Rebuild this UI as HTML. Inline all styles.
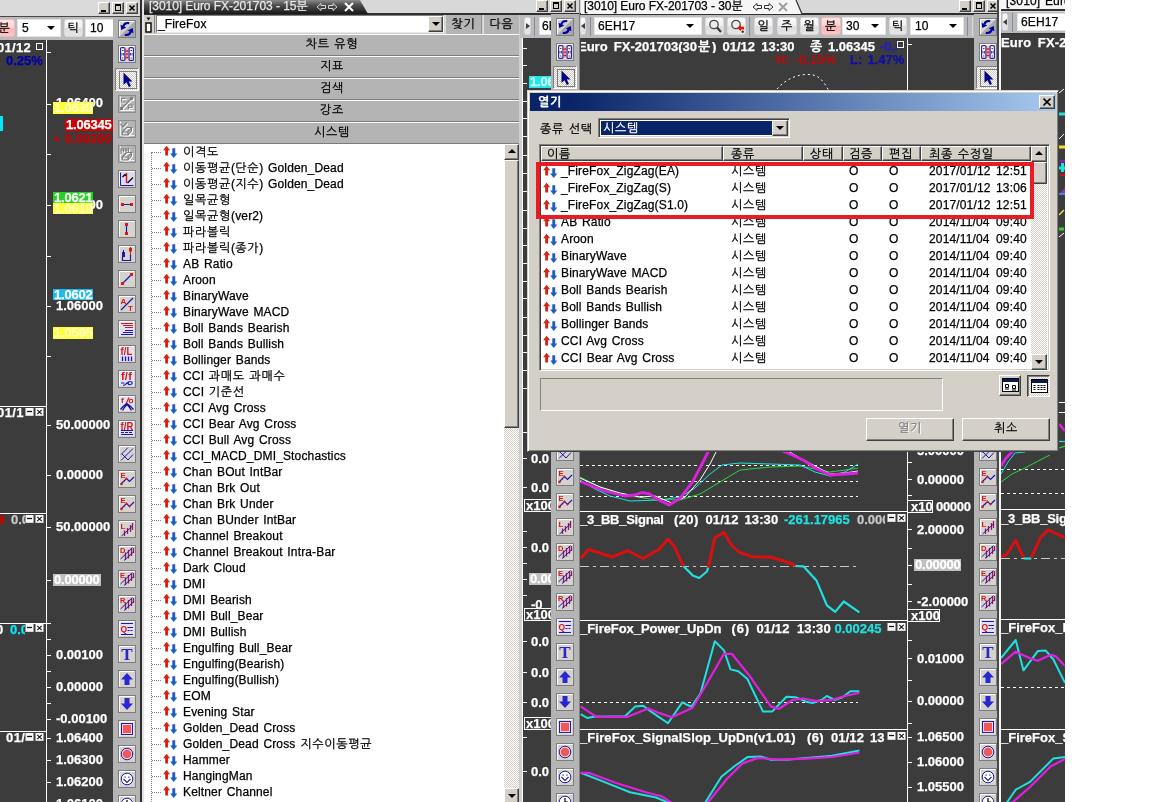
<!DOCTYPE html>
<html lang="ko"><head><meta charset="utf-8"><title>열기</title>
<style>
html,body{margin:0;padding:0;background:#fff;}
body{width:1152px;height:802px;position:relative;overflow:hidden;font:12px/14px "Liberation Sans","NanumGothic",sans-serif;color:#000;letter-spacing:0.150px;word-spacing:1.200px;-webkit-text-stroke:0.250px currentColor;}
.k{letter-spacing:0.72px;}
#app{position:absolute;left:0;top:0;width:1065px;height:802px;overflow:hidden;background:#3c3c3c;will-change:transform;}
.a{position:absolute;}
.t{position:absolute;white-space:nowrap;}
.cb{position:absolute;white-space:nowrap;font-weight:bold;font-size:13px;line-height:13px;color:#fff;letter-spacing:0;word-spacing:1.600px;}
.bar{position:absolute;background:#d6d6d6;}
.vtb{position:absolute;background:#b4b4b4;}
.ic{position:absolute;width:18px;height:18px;}
.btn{position:absolute;background:#d4d0c8;box-sizing:border-box;border:1px solid;border-color:#fff #404040 #404040 #fff;box-shadow:inset -1px -1px 0 #808080;}
.wb{position:absolute;width:12px;height:12px;background:#d4d0c8;box-sizing:border-box;border:1px solid;border-color:#fff #404040 #404040 #fff;box-shadow:inset -1px -1px 0 #808080;}
.sec{position:absolute;left:144px;width:376px;height:22px;box-sizing:border-box;background:#b4b4b4;border-top:1px solid #fafafa;border-bottom:1px solid #7c7c7c;text-align:center;line-height:18px;font-size:12px;}
.tb{position:absolute;box-sizing:border-box;border:1px solid #d8d8d8;border-radius:2.500px;background:linear-gradient(#fbfbfb 0%,#efefef 50%,#dedede 52%,#e6e6e6 100%);text-align:center;font-size:12px;line-height:16px;}
.tb.on{background:linear-gradient(#ffe4e4 0%,#ffd0d0 50%,#ffb4b4 52%,#ffc4c4 100%);border-color:#f0b8b8;}
.inp{position:absolute;box-sizing:border-box;background:#fff;border:1px solid #e4e4e4;font-size:12px;line-height:16px;padding-left:4px;}
.hl{position:absolute;height:1px;background:#fff;}
.vl{position:absolute;width:1px;background:#fff;}
.tick{position:absolute;width:4px;height:1px;background:#fff;}
.lab{position:absolute;white-space:nowrap;font-weight:bold;font-size:13px;line-height:12px;height:12px;letter-spacing:-0.2px;overflow:hidden;box-sizing:border-box;padding-left:1px;}
.pb{position:absolute;width:8px;height:8px;box-sizing:border-box;border:1px solid #fff;background:#3c3c3c;}
.row{position:absolute;left:0;height:17px;line-height:17px;white-space:nowrap;}
</style></head><body><div id="app">
<svg width="0" height="0" style="position:absolute"><defs><pattern id="dz" width="2" height="2" patternUnits="userSpaceOnUse"><rect width="2" height="2" fill="#fff"/><rect width="1" height="1" fill="#d0ccc4"/><rect x="1" y="1" width="1" height="1" fill="#d0ccc4"/></pattern></defs></svg>

<div class="bar" style="left:0;top:0;width:141px;height:17px;background:#dadada"></div>
<div class="a" style="left:0;top:15.500px;width:141px;height:1.500px;background:#484848"></div>
<div class="wb" style="left:98px;top:2px"><div class="a" style="left:2px;top:7px;width:5px;height:2px;background:#000"></div></div><div class="wb" style="left:112px;top:2px"><div class="a" style="left:2px;top:1px;width:6px;height:7px;box-sizing:border-box;border:1px solid #000;border-top-width:2px"></div></div><div class="wb" style="left:126px;top:2px"><svg class="a" style="left:1px;top:1px" width="8" height="8"><path d="M1.5 1.5L6.5 6.5M6.5 1.5L1.5 6.5" stroke="#000" stroke-width="1.6"/></svg></div>
<div class="a" style="left:0;top:17px;width:114px;height:23px;background:#b9bbbe"></div>
<div class="tb on" style="left:-6px;top:19px;width:21px;height:18px"><span class="k">분</span></div>
<div class="inp" style="left:17px;top:19px;width:44px;height:18px">5<span class="a" style="right:5px;top:6px;width:0;height:0;border:4px solid transparent;border-top:4px solid #000;border-bottom:0"></span></div>
<div class="tb" style="left:64px;top:19px;width:19px;height:18px"><span class="k">틱</span></div>
<div class="inp" style="left:85px;top:19px;width:30px;height:18px">10</div>
<div class="vtb" style="left:113px;top:17px;width:27px;height:785px"></div><svg class="ic" style="left:118px;top:20px" viewBox="0 0 18 18"><rect x="0.5" y="0.5" width="17" height="17" fill="#d6d3ce" stroke="#7c7c7c"/><path d="M1.5 16.5V1.5H16.5" fill="none" stroke="#fff"/><path d="M17 1V17H1Z" fill="#a8a8a8"/><path d="M11.200 3.200C8.500 2.600 6 3.800 5.300 6.500" fill="none" stroke="#0000a8" stroke-width="2.200"/><path d="M3.200 10L2.600 4.800L8.300 7.600Z" fill="#0000a8"/><path d="M6.800 14.800C9.500 15.400 12 14.200 12.700 11.500" fill="none" stroke="#0000a8" stroke-width="2.200"/><path d="M14.800 8L15.400 13.200L9.700 10.400Z" fill="#0000a8"/></svg><svg class="ic" style="left:118px;top:45px" viewBox="0 0 18 18"><rect x="0.5" y="0.5" width="17" height="17" fill="#d6d3ce" stroke="#7c7c7c"/><path d="M1.5 16.5V1.5H16.5" fill="none" stroke="#fff"/><rect x="2" y="2" width="14" height="14" fill="#e6d8f2"/><rect x="7" y="3" width="4" height="12" fill="#f4b8c8"/><rect x="2.600" y="2.600" width="4.300" height="12.800" rx="1" fill="#fff" stroke="#28289c" stroke-width="1.200"/><rect x="11.100" y="2.600" width="4.300" height="12.800" rx="1" fill="#fff" stroke="#28289c" stroke-width="1.200"/><path d="M4 5.500H5.500M4 8V10.500M5.500 8V10.500M4 13H5.500M12.500 5.500H14M12.500 8V10.500M14 8V10.500M12.500 13H14" stroke="#28289c" stroke-width="0.900" fill="none"/><path d="M7.500 6H10.500M7.500 12.500H10.500" stroke="#e01818" stroke-width="1.600"/><path d="M8.200 8.200H9.800V10.200H8.200Z" fill="#e01818"/></svg><svg class="a" style="left:115px;top:68px" width="24" height="23" viewBox="0 0 24 23"><rect x="0" y="0" width="24" height="23" fill="url(#dz)"/><path d="M0.500 22.500V0.500H23.500" fill="none" stroke="#808080"/><path d="M23.500 0.500V22.500H0.500" fill="none" stroke="#fff"/><rect x="4.500" y="3.500" width="17" height="17" fill="url(#dz)" stroke="#7c7c7c"/><g transform="translate(4,3)"><path d="M4.500 1.500V14L7.500 11.200L9.800 16L12 15L9.800 10.400H13.500Z" fill="#00008c"/></g></svg><svg class="ic" style="left:118px;top:95px" viewBox="0 0 18 18"><rect x="0.500" y="0.500" width="17" height="17" fill="#b4b4b4" stroke="#8c8c8c"/><path d="M2.500 1.500V15.500H16.500" fill="none" stroke="#f4f4f4"/><g transform="translate(1,1)" fill="none" stroke="#fff" stroke-width="1.2"><path d="M3 14L14 3M3.5 3.5H7.5M3.5 3.5V7H7.5M10.5 14V10H14V12.5H10.5"/><rect x="2.5" y="12.5" width="2" height="2"/><rect x="12.5" y="2.5" width="2" height="2"/></g><g fill="none" stroke="#808080" stroke-width="1.2"><path d="M3 14L14 3M3.5 3.5H7.5M3.5 3.5V7H7.5M10.5 14V10H14V12.5H10.5"/><rect x="2.5" y="12.5" width="2" height="2"/><rect x="12.5" y="2.5" width="2" height="2"/></g></svg><svg class="ic" style="left:118px;top:120px" viewBox="0 0 18 18"><rect x="0.500" y="0.500" width="17" height="17" fill="#b4b4b4" stroke="#8c8c8c"/><path d="M2.500 1.500V15.500H16.500" fill="none" stroke="#f4f4f4"/><g transform="translate(1,1)" fill="none" stroke="#fff" stroke-width="1.2"><path d="M2.5 4L5 7L9 2.5M4.5 12L8.5 7.5H13.5L10 12ZM4.5 12V15H10V12M10 15L13.5 10.5V7.5"/></g><g fill="none" stroke="#808080" stroke-width="1.2"><path d="M2.5 4L5 7L9 2.5M4.5 12L8.5 7.5H13.5L10 12ZM4.5 12V15H10V12M10 15L13.5 10.5V7.5"/></g></svg><svg class="ic" style="left:118px;top:145px" viewBox="0 0 18 18"><rect x="0.500" y="0.500" width="17" height="17" fill="#b4b4b4" stroke="#8c8c8c"/><path d="M2.500 1.500V15.500H16.500" fill="none" stroke="#f4f4f4"/><g transform="translate(1,1)" fill="none" stroke="#fff" stroke-width="1.2"><path d="M3 3V9M5.5 3V7M8 3V7M10.5 3V7M3 5H11M4.5 12L8.5 7.5H13.5L10 12ZM4.5 12V15H10V12M10 15L13.5 10.5V7.5"/></g><g fill="none" stroke="#808080" stroke-width="1.2"><path d="M3 3V9M5.5 3V7M8 3V7M10.5 3V7M3 5H11M4.5 12L8.5 7.5H13.5L10 12ZM4.5 12V15H10V12M10 15L13.5 10.5V7.5"/></g></svg><svg class="ic" style="left:118px;top:170px" viewBox="0 0 18 18"><rect x="0.5" y="0.5" width="17" height="17" fill="#d6d3ce" stroke="#7c7c7c"/><path d="M1.5 16.5V1.5H16.5" fill="none" stroke="#fff"/><rect x="2" y="2" width="14" height="14" fill="#e0daf0"/><path d="M2.500 2.500V15.500H15.500" fill="none" stroke="#1818b0"/><path d="M8.5 3V13" stroke="#d81818" stroke-width="1.4"/><path d="M4.5 7L7 4.5L8 6M9.500 13L15 7.500" fill="none" stroke="#000" stroke-width="1.2"/></svg><svg class="ic" style="left:118px;top:195px" viewBox="0 0 18 18"><rect x="0.5" y="0.5" width="17" height="17" fill="#d6d3ce" stroke="#7c7c7c"/><path d="M1.5 16.5V1.5H16.5" fill="none" stroke="#fff"/><path d="M4 9.500H14" stroke="#1818b0" stroke-width="1"/><rect x="3" y="8" width="3" height="3" fill="#d81818"/><rect x="12" y="8" width="3" height="3" fill="#d81818"/></svg><svg class="ic" style="left:118px;top:220px" viewBox="0 0 18 18"><rect x="0.5" y="0.5" width="17" height="17" fill="#d6d3ce" stroke="#7c7c7c"/><path d="M1.5 16.5V1.5H16.5" fill="none" stroke="#fff"/><path d="M8.5 4V14" stroke="#1818b0" stroke-width="1.2"/><rect x="7" y="3" width="3" height="3" fill="#d81818"/><rect x="7" y="12" width="3" height="3" fill="#d81818"/></svg><svg class="ic" style="left:118px;top:245px" viewBox="0 0 18 18"><rect x="0.5" y="0.5" width="17" height="17" fill="#d6d3ce" stroke="#7c7c7c"/><path d="M1.5 16.5V1.5H16.5" fill="none" stroke="#fff"/><path d="M4.500 12V15.500H12.500V10" fill="none" stroke="#1818b0" stroke-width="1.2"/><path d="M5.500 5V12" stroke="#1818b0"/><rect x="4" y="7" width="3" height="5" fill="#1818b0"/><path d="M12.500 2V10" stroke="#d81818"/><rect x="11" y="3" width="3" height="3.500" fill="#d81818"/></svg><svg class="ic" style="left:118px;top:270px" viewBox="0 0 18 18"><rect x="0.5" y="0.5" width="17" height="17" fill="#d6d3ce" stroke="#7c7c7c"/><path d="M1.5 16.5V1.5H16.5" fill="none" stroke="#fff"/><path d="M4.5 13.500L13.500 4.500" stroke="#1818b0" stroke-width="1.2"/><rect x="3" y="12" width="3" height="3" fill="#d81818"/><rect x="12" y="3" width="3" height="3" fill="#d81818"/></svg><svg class="ic" style="left:118px;top:295px" viewBox="0 0 18 18"><rect x="0.5" y="0.5" width="17" height="17" fill="#d6d3ce" stroke="#7c7c7c"/><path d="M1.5 16.5V1.5H16.5" fill="none" stroke="#fff"/><path d="M3 15L15 3" stroke="#1818b0" stroke-width="1.2"/><text x="2.500" y="9" font-size="8" font-family="Liberation Sans,sans-serif" font-weight="bold" fill="#d81818">A</text><text x="10" y="15.500" font-size="8" font-family="Liberation Sans,sans-serif" font-weight="bold" fill="#d81818">T</text></svg><svg class="ic" style="left:118px;top:320px" viewBox="0 0 18 18"><rect x="0.5" y="0.5" width="17" height="17" fill="#d6d3ce" stroke="#7c7c7c"/><path d="M1.5 16.5V1.5H16.5" fill="none" stroke="#fff"/><rect x="2" y="2" width="14" height="14" fill="#e4e0f4"/><path d="M3 3.500H15M5 5.500H15M7 7.500H15" stroke="#d81818" stroke-width="1.1"/><path d="M7 10.500H15M5 12.500H15M3 14.500H15" stroke="#1818b0" stroke-width="1.1"/></svg><svg class="ic" style="left:118px;top:345px" viewBox="0 0 18 18"><rect x="0.5" y="0.5" width="17" height="17" fill="#d6d3ce" stroke="#7c7c7c"/><path d="M1.5 16.5V1.5H16.5" fill="none" stroke="#fff"/><rect x="2" y="2" width="14" height="14" fill="#e4e0f4"/><text x="2.500" y="10" font-size="10" textLength="12" lengthAdjust="spacingAndGlyphs" font-family="Liberation Sans,sans-serif" font-weight="bold" fill="#d81818">f/L</text><path d="M4.500 11.500V16M7.500 11.500V16M10.500 11.500V16M13.500 11.500V16" stroke="#1818b0" stroke-width="1.300"/></svg><svg class="ic" style="left:118px;top:370px" viewBox="0 0 18 18"><rect x="0.5" y="0.5" width="17" height="17" fill="#d6d3ce" stroke="#7c7c7c"/><path d="M1.5 16.5V1.5H16.5" fill="none" stroke="#fff"/><rect x="2" y="2" width="14" height="14" fill="#e4e0f4"/><text x="3" y="10" font-size="10" textLength="11" lengthAdjust="spacingAndGlyphs" font-family="Liberation Sans,sans-serif" font-weight="bold" fill="#d81818">f/f</text><path d="M3 13H6.500M5 15.500C8 15.500 9 11.500 12 11.500S15 14 12.500 14.500C10 15 9 13 11 12.500" fill="none" stroke="#1818b0" stroke-width="1.1"/></svg><svg class="ic" style="left:118px;top:395px" viewBox="0 0 18 18"><rect x="0.5" y="0.5" width="17" height="17" fill="#d6d3ce" stroke="#7c7c7c"/><path d="M1.5 16.5V1.5H16.5" fill="none" stroke="#fff"/><rect x="2" y="2" width="14" height="14" fill="#e4e0f4"/><text x="3" y="8" font-size="8" font-family="Liberation Sans,sans-serif" font-weight="bold" fill="#d81818">f</text><circle cx="13" cy="6" r="1.8" fill="none" stroke="#d81818" stroke-width="1.1"/><path d="M11 2.500L8 9" stroke="#d81818" stroke-width="1.2"/><path d="M2.500 14.500C5 11 7 10 9 8.500M4.500 15.500C6 12 8 10.500 9.500 9M9 8.500C11 10 13 11.500 15.500 14.500M9.500 10C11 11.500 12 13 13.500 15.500" fill="none" stroke="#101090" stroke-width="1.3"/></svg><svg class="ic" style="left:118px;top:420px" viewBox="0 0 18 18"><rect x="0.5" y="0.5" width="17" height="17" fill="#d6d3ce" stroke="#7c7c7c"/><path d="M1.5 16.5V1.5H16.5" fill="none" stroke="#fff"/><rect x="2" y="2" width="14" height="14" fill="#e4e0f4"/><text x="2.500" y="10" font-size="10" textLength="13" lengthAdjust="spacingAndGlyphs" font-family="Liberation Sans,sans-serif" font-weight="bold" fill="#d81818">f/R</text><path d="M3 10.500H15M3 14.500H15" stroke="#1818b0" stroke-width="1.2"/><path d="M3 12.500H15" stroke="#1818b0" stroke-width="1.2" stroke-dasharray="3 1"/></svg><svg class="ic" style="left:118px;top:445px" viewBox="0 0 18 18"><rect x="0.5" y="0.5" width="17" height="17" fill="#d6d3ce" stroke="#7c7c7c"/><path d="M1.5 16.5V1.5H16.5" fill="none" stroke="#fff"/><path d="M3 9.500L10 2.500M3 15.500L15 3.500M4 9L10 15L15 9.500" fill="none" stroke="#1818b0" stroke-width="1"/></svg><svg class="ic" style="left:118px;top:470px" viewBox="0 0 18 18"><rect x="0.5" y="0.5" width="17" height="17" fill="#d6d3ce" stroke="#7c7c7c"/><path d="M1.5 16.5V1.5H16.5" fill="none" stroke="#fff"/><path d="M3 14L8.500 8.500L11.500 11.500L16 7" fill="none" stroke="#1818b0" stroke-width="1.2"/><text x="2.500" y="8" font-size="7.500" font-family="Liberation Sans,sans-serif" font-weight="bold" fill="#d81818">E</text><path d="M7 9.500L8.500 7L10 9.500Z" fill="#d81818"/><circle cx="3.500" cy="14" r="1.300" fill="#d81818"/><path d="M5.500 12L6.500 11" stroke="#d81818"/></svg><svg class="ic" style="left:118px;top:495px" viewBox="0 0 18 18"><rect x="0.5" y="0.5" width="17" height="17" fill="#d6d3ce" stroke="#7c7c7c"/><path d="M1.5 16.5V1.5H16.5" fill="none" stroke="#fff"/><path d="M3 14L8.500 8.500L11.500 11.500L16 7" fill="none" stroke="#1818b0" stroke-width="1.2"/><text x="2.500" y="8" font-size="7.500" font-family="Liberation Sans,sans-serif" font-weight="bold" fill="#d81818">E</text><path d="M7 9.500L8.500 7L10 9.500Z" fill="#d81818"/><circle cx="3.500" cy="14" r="1.300" fill="#d81818"/><path d="M5.500 12L6.500 11" stroke="#d81818"/><path d="M10.200 10.500H13L11.500 13Z" fill="#d81818"/></svg><svg class="ic" style="left:118px;top:520px" viewBox="0 0 18 18"><rect x="0.5" y="0.5" width="17" height="17" fill="#d6d3ce" stroke="#7c7c7c"/><path d="M1.5 16.5V1.5H16.5" fill="none" stroke="#fff"/><text x="2.500" y="8.500" font-size="8" font-family="Liberation Sans,sans-serif" font-weight="bold" fill="#d81818">L</text><path d="M6.500 10.500V16M9.500 8V14M12.500 5V12M14.500 3V10" fill="none" stroke="#a01858" stroke-width="1.300"/><path d="M3.500 16L15 5.500" fill="none" stroke="#1818b0" stroke-width="1"/></svg><svg class="ic" style="left:118px;top:545px" viewBox="0 0 18 18"><rect x="0.5" y="0.5" width="17" height="17" fill="#d6d3ce" stroke="#7c7c7c"/><path d="M1.5 16.5V1.5H16.5" fill="none" stroke="#fff"/><path d="M7.500 7.500V15M10.500 5V13.500M13.500 3V11M15.500 3V8" fill="none" stroke="#a01858" stroke-width="1.300"/><path d="M2.500 14L14.500 2.500M6 15.500L16 6.500" fill="none" stroke="#1818b0" stroke-width="1"/><text x="2" y="8" font-size="7.500" font-family="Liberation Sans,sans-serif" font-weight="bold" fill="#d81818">D</text></svg><svg class="ic" style="left:118px;top:570px" viewBox="0 0 18 18"><rect x="0.5" y="0.5" width="17" height="17" fill="#d6d3ce" stroke="#7c7c7c"/><path d="M1.5 16.5V1.5H16.5" fill="none" stroke="#fff"/><path d="M7.500 7.500V15M10.500 5V13.500M13.500 3V11M15.500 3V8" fill="none" stroke="#a01858" stroke-width="1.300"/><path d="M2.500 14L14.500 2.500M6 15.500L16 6.500" fill="none" stroke="#1818b0" stroke-width="1"/><text x="2" y="8" font-size="7.500" font-family="Liberation Sans,sans-serif" font-weight="bold" fill="#d81818">E</text></svg><svg class="ic" style="left:118px;top:595px" viewBox="0 0 18 18"><rect x="0.5" y="0.5" width="17" height="17" fill="#d6d3ce" stroke="#7c7c7c"/><path d="M1.5 16.5V1.5H16.5" fill="none" stroke="#fff"/><path d="M7.500 7.500V15M10.500 5V13.500M13.500 3V11M15.500 3V8" fill="none" stroke="#a01858" stroke-width="1.300"/><path d="M2.500 14L14.500 2.500M6 15.500L16 6.500" fill="none" stroke="#1818b0" stroke-width="1"/><text x="2" y="8" font-size="7.500" font-family="Liberation Sans,sans-serif" font-weight="bold" fill="#d81818">R</text></svg><svg class="ic" style="left:118px;top:620px" viewBox="0 0 18 18"><rect x="0.5" y="0.5" width="17" height="17" fill="#d6d3ce" stroke="#7c7c7c"/><path d="M1.5 16.5V1.5H16.5" fill="none" stroke="#fff"/><rect x="2" y="2" width="14" height="14" fill="#e4e0f4"/><path d="M3 3.500H15M3 14.500H15M9.500 7.500H15" stroke="#1818b0" stroke-width="1.2"/><path d="M9.500 10.500H15" stroke="#1818b0" stroke-width="1.2" stroke-dasharray="2 1"/><text x="2.500" y="12" font-size="8.500" font-family="Liberation Sans,sans-serif" font-weight="bold" fill="#d81818">Q</text></svg><svg class="ic" style="left:118px;top:645px" viewBox="0 0 18 18"><rect x="0.5" y="0.5" width="17" height="17" fill="#d6d3ce" stroke="#7c7c7c"/><path d="M1.5 16.5V1.5H16.5" fill="none" stroke="#fff"/><text x="9" y="15" font-size="17" font-family="Liberation Serif,serif" font-weight="bold" fill="#2828c8" text-anchor="middle">T</text></svg><svg class="ic" style="left:118px;top:670px" viewBox="0 0 18 18"><rect x="0.5" y="0.5" width="17" height="17" fill="#d6d3ce" stroke="#7c7c7c"/><path d="M1.5 16.5V1.5H16.5" fill="none" stroke="#fff"/><path d="M9 3L15 9.500H11.500V15H6.500V9.500H3Z" fill="#2828d0"/></svg><svg class="ic" style="left:118px;top:695px" viewBox="0 0 18 18"><rect x="0.5" y="0.5" width="17" height="17" fill="#d6d3ce" stroke="#7c7c7c"/><path d="M1.5 16.5V1.5H16.5" fill="none" stroke="#fff"/><path d="M9 15L15 8.500H11.500V3H6.500V8.500H3Z" fill="#2828d0"/></svg><svg class="ic" style="left:118px;top:720px" viewBox="0 0 18 18"><rect x="0.5" y="0.5" width="17" height="17" fill="#d6d3ce" stroke="#7c7c7c"/><path d="M1.5 16.5V1.5H16.5" fill="none" stroke="#fff"/><rect x="2" y="2" width="14" height="14" fill="#e4e0f4"/><rect x="3.500" y="3.500" width="11" height="11" fill="#f05858" stroke="#2020a0" stroke-width="1"/><rect x="4.500" y="4.500" width="9" height="9" fill="none" stroke="#f4d0e0" stroke-width="1"/></svg><svg class="ic" style="left:118px;top:745px" viewBox="0 0 18 18"><rect x="0.5" y="0.5" width="17" height="17" fill="#d6d3ce" stroke="#7c7c7c"/><path d="M1.5 16.5V1.5H16.5" fill="none" stroke="#fff"/><circle cx="9" cy="9" r="5.800" fill="#f4d0e0" stroke="#2020a0" stroke-width="1"/><circle cx="9" cy="9" r="4.300" fill="#f05858"/></svg><svg class="ic" style="left:118px;top:770px" viewBox="0 0 18 18"><rect x="0.5" y="0.5" width="17" height="17" fill="#d6d3ce" stroke="#7c7c7c"/><path d="M1.5 16.5V1.5H16.5" fill="none" stroke="#fff"/><circle cx="9" cy="9" r="5.800" fill="#fff" stroke="#2020a0" stroke-width="1"/><path d="M5.500 9L9 12.500L12.500 9" fill="none" stroke="#2020a0" stroke-width="1.1"/><rect x="6.500" y="6.500" width="1.200" height="1.200" fill="#2020a0"/><rect x="10.300" y="6.500" width="1.200" height="1.200" fill="#2020a0"/></svg><svg class="ic" style="left:118px;top:795px" viewBox="0 0 18 18"><rect x="0.5" y="0.5" width="17" height="17" fill="#d6d3ce" stroke="#7c7c7c"/><path d="M1.5 16.5V1.5H16.5" fill="none" stroke="#fff"/><circle cx="9" cy="9" r="5.800" fill="#fff" stroke="#2020a0" stroke-width="1"/><path d="M9 5V9H12" fill="none" stroke="#000" stroke-width="1.2"/></svg>
<div class="a" style="left:140px;top:0;width:2px;height:802px;background:#2c2c2c"></div>
<div class="a" style="left:142px;top:0;width:2px;height:802px;background:#e4e4e4"></div>
<div class="vl" style="left:46px;top:40px;height:762px"></div>
<div class="cb" style="left:-3px;top:41px;letter-spacing:0.300px">01/12</div>
<div class="pb" style="left:36px;top:43px;width:7px;height:7px"></div>
<div class="cb" style="left:6px;top:54px;color:#0000a8">0.25%</div>
<div class="a" style="left:0;top:116px;width:3px;height:15px;background:#00e8f8"></div>
<div class="tick" style="left:47px;top:52px"></div>
<div class="tick" style="left:47px;top:104px"></div>
<div class="tick" style="left:47px;top:154px"></div>
<div class="tick" style="left:47px;top:205px"></div>
<div class="tick" style="left:47px;top:256px"></div>
<div class="tick" style="left:47px;top:306px"></div>
<div class="tick" style="left:47px;top:356px"></div>
<div class="tick" style="left:47px;top:425px"></div>
<div class="tick" style="left:47px;top:475px"></div>
<div class="tick" style="left:47px;top:527px"></div>
<div class="tick" style="left:47px;top:580px"></div>
<div class="tick" style="left:47px;top:623px"></div>
<div class="tick" style="left:47px;top:639px"></div>
<div class="tick" style="left:47px;top:655px"></div>
<div class="tick" style="left:47px;top:671px"></div>
<div class="tick" style="left:47px;top:687px"></div>
<div class="tick" style="left:47px;top:703px"></div>
<div class="tick" style="left:47px;top:719px"></div>
<div class="tick" style="left:47px;top:738px"></div>
<div class="tick" style="left:47px;top:760px"></div>
<div class="tick" style="left:47px;top:782px"></div>
<div class="cb" style="left:56px;top:96px;color:#fff">1.06400</div>
<div class="lab" style="left:53px;top:102px;width:40px;background:#ffff38;color:#ffffc0">1.0639</div>
<div class="lab" style="left:65px;top:119px;width:48px;background:#d00000;color:#fff">1.06345</div>
<div class="cb" style="left:54px;top:132px;color:#c80000"><span style="font-size:6px;vertical-align:2px">◆</span> 0.00260</div>
<div class="cb" style="left:56px;top:198px;color:#fff">1.06200</div>
<div class="lab" style="left:53px;top:192px;width:40px;background:#28d028;color:#fff">1.0621</div>
<div class="lab" style="left:53px;top:203px;width:40px;background:#ffff38;color:#ffffc0;height:11px">1.0619</div>
<div class="lab" style="left:53px;top:289px;width:40px;background:#20b8f0;color:#fff;height:11px">1.0602</div>
<div class="cb" style="left:56px;top:299px;color:#fff">1.06000</div>
<div class="lab" style="left:53px;top:327px;width:40px;background:#ffff38;color:#ffffc0">1.0595</div>
<div class="hl" style="left:0;top:406px;width:46px"></div>
<div class="cb" style="left:-3px;top:406px;letter-spacing:0.400px">01/1</div>
<svg class="a" style="left:25px;top:408px" width="20" height="8" viewBox="0 0 20 8"><rect x="0.500" y="0" width="8" height="8" fill="#f8f8f8"/><path d="M2 3.500H7" stroke="#111" stroke-width="1.300"/><rect x="10.500" y="0" width="8" height="8" fill="#f8f8f8"/><path d="M12.300 1.800L16.700 6.200M16.700 1.800L12.300 6.200" stroke="#111" stroke-width="1.100"/><path d="M0.500 8H8.500M10.500 8H18.500" stroke="#a0a0a0" stroke-width="0.800"/></svg>
<div class="cb" style="left:56px;top:418px;color:#fff">50.00000</div>
<div class="cb" style="left:56px;top:468px;color:#fff">0.00000</div>
<div class="hl" style="left:0;top:513px;width:46px"></div>
<div class="cb" style="left:-2px;top:513px;color:#d00000">8</div><div class="cb" style="left:11px;top:513px;color:#c8c8c8;width:14px;overflow:hidden">0.0</div>
<svg class="a" style="left:25px;top:515px" width="20" height="8" viewBox="0 0 20 8"><rect x="0.500" y="0" width="8" height="8" fill="#f8f8f8"/><path d="M2 3.500H7" stroke="#111" stroke-width="1.300"/><rect x="10.500" y="0" width="8" height="8" fill="#f8f8f8"/><path d="M12.300 1.800L16.700 6.200M16.700 1.800L12.300 6.200" stroke="#111" stroke-width="1.100"/><path d="M0.500 8H8.500M10.500 8H18.500" stroke="#a0a0a0" stroke-width="0.800"/></svg>
<div class="cb" style="left:56px;top:520px;color:#fff">50.00000</div>
<div class="lab" style="left:53px;top:574px;width:48px;background:#c0c0c0;color:#fff">0.00000</div>
<div class="hl" style="left:0;top:623px;width:50px"></div>
<div class="cb" style="left:-4px;top:623px">0</div><div class="cb" style="left:10px;top:623px;color:#00e8f8;width:15px;overflow:hidden">0.0</div>
<svg class="a" style="left:25px;top:624px" width="20" height="8" viewBox="0 0 20 8"><rect x="0.500" y="0" width="8" height="8" fill="#f8f8f8"/><path d="M2 3.500H7" stroke="#111" stroke-width="1.300"/><rect x="10.500" y="0" width="8" height="8" fill="#f8f8f8"/><path d="M12.300 1.800L16.700 6.200M16.700 1.800L12.300 6.200" stroke="#111" stroke-width="1.100"/><path d="M0.500 8H8.500M10.500 8H18.500" stroke="#a0a0a0" stroke-width="0.800"/></svg>
<div class="cb" style="left:56px;top:648px;color:#fff">0.00100</div>
<div class="cb" style="left:56px;top:680px;color:#fff">0.00000</div>
<div class="cb" style="left:56px;top:712px;color:#fff">-0.00100</div>
<div class="hl" style="left:0;top:731px;width:46px"></div>
<div class="cb" style="left:6px;top:731px;letter-spacing:0.400px">01/</div>
<svg class="a" style="left:25px;top:733px" width="20" height="8" viewBox="0 0 20 8"><rect x="0.500" y="0" width="8" height="8" fill="#f8f8f8"/><path d="M2 3.500H7" stroke="#111" stroke-width="1.300"/><rect x="10.500" y="0" width="8" height="8" fill="#f8f8f8"/><path d="M12.300 1.800L16.700 6.200M16.700 1.800L12.300 6.200" stroke="#111" stroke-width="1.100"/><path d="M0.500 8H8.500M10.500 8H18.500" stroke="#a0a0a0" stroke-width="0.800"/></svg>
<div class="cb" style="left:56px;top:731px;color:#fff">1.06400</div>
<div class="cb" style="left:56px;top:753px;color:#fff">1.06300</div>
<div class="cb" style="left:56px;top:775px;color:#fff">1.06200</div>
<div class="cb" style="left:56px;top:797px;color:#fff">1.06100</div>
<div class="a" style="left:144px;top:0;width:408px;height:802px;background:#fff"></div>
<div class="bar" style="left:144px;top:0;width:436px;height:14px;background:#d8d8d8"></div>
<div class="a" style="left:144px;top:13px;width:436px;height:2px;background:#303030"></div>
<svg class="a" style="left:144px;top:0" width="230" height="14"><defs><linearGradient id="tg" x1="0" y1="0" x2="0" y2="1"><stop offset="0" stop-color="#8a8a8a"/><stop offset="0.35" stop-color="#505050"/><stop offset="1" stop-color="#181818"/></linearGradient></defs><path d="M0 0H216L224 14H0Z" fill="url(#tg)"/></svg>
<div class="t" style="left:149px;top:0px;color:#e8e8e8;font-size:12px;line-height:13px;letter-spacing:-0.050px;word-spacing:0">[3010] Euro FX-201703 - 15<span class="k">분</span></div>
<svg class="a" style="left:316px;top:2px" width="22" height="10"><path d="M1 5L5 1.500V3.500H9.500V6.500H5V8.500ZM21 5L17 1.500V3.500H12.500V6.500H17V8.500Z" fill="none" stroke="#d8d8d8" stroke-width="1"/></svg>
<svg class="a" style="left:344px;top:2px" width="10" height="10"><path d="M1 1L9 9M9 1L1 9" stroke="#fff" stroke-width="2"/></svg>
<div class="wb" style="left:536px;top:0px"><div class="a" style="left:2px;top:7px;width:5px;height:2px;background:#000"></div></div><div class="wb" style="left:550px;top:0px"><div class="a" style="left:2px;top:1px;width:6px;height:7px;box-sizing:border-box;border:1px solid #000;border-top-width:2px"></div></div><div class="wb" style="left:564px;top:0px"><svg class="a" style="left:1px;top:1px" width="8" height="8"><path d="M1.5 1.5L6.5 6.5M6.5 1.5L1.5 6.5" stroke="#000" stroke-width="1.6"/></svg></div>
<div class="a" style="left:144px;top:15px;width:376px;height:19px;background:#d4d0c8"></div>
<svg class="a" style="left:145px;top:17px" width="8" height="16"><path d="M1.500 0.500L3.500 3.500L5.500 0.500Z" fill="#000"/><rect x="1" y="6" width="5" height="9" fill="#fff" stroke="#000" stroke-width="1.400"/></svg>
<div class="a" style="left:154px;top:15px;width:1px;height:18px;background:#808080"></div>
<div class="a" style="left:156px;top:15px;width:288px;height:18px;background:#fff;box-sizing:border-box;border:1px solid #808080;border-right-color:#fff;border-bottom-color:#e8e8e8"></div>
<div class="t" style="left:158px;top:17px;font-size:12px">_FireFox</div>
<div class="btn" style="left:428px;top:16px;width:15px;height:16px"><span class="a" style="left:3px;top:5px;width:0;height:0;border:4px solid transparent;border-top:4px solid #000;border-bottom:0"></span></div>
<div class="a" style="left:445px;top:15px;width:37px;height:19px;background:#b4b4b4;box-sizing:border-box;border-left:1px solid #e0e0e0;border-right:1px solid #909090;text-align:center;line-height:18px"><span class="k">찾기</span></div>
<div class="a" style="left:483px;top:15px;width:37px;height:19px;background:#b4b4b4;box-sizing:border-box;border-left:1px solid #e0e0e0;border-right:1px solid #909090;text-align:center;line-height:18px"><span class="k">다음</span></div>
<div class="sec" style="top:34px"><span class="k">차트</span> <span class="k">유형</span></div>
<div class="sec" style="top:56px"><span class="k">지표</span></div>
<div class="sec" style="top:78px"><span class="k">검색</span></div>
<div class="sec" style="top:100px"><span class="k">강조</span></div>
<div class="sec" style="top:122px"><span class="k">시스템</span></div>
<div class="a" style="left:151px;top:152px;width:0;height:650px;border-left:1px dotted #808080"></div>
<div class="a" style="left:152px;top:152px;width:9px;height:0;border-top:1px dotted #808080"></div>
<svg class="a" style="left:163px;top:145px" width="16" height="15" viewBox="0 0 16 15"><path d="M3.600 0.800L7.100 5.200H5.100V10.600H2.200V5.200H0.100Z" fill="#d42414"/><path d="M10.700 12.900L14.300 8.500H12.200V3.200H9.300V8.500H7.200Z" fill="#1c5cc8"/></svg>
<div class="t" style="left:183px;top:144px;line-height:16px;font-size:12px"><span class="k">이격도</span></div>
<div class="a" style="left:152px;top:168px;width:9px;height:0;border-top:1px dotted #808080"></div>
<svg class="a" style="left:163px;top:161px" width="16" height="15" viewBox="0 0 16 15"><path d="M3.600 0.800L7.100 5.200H5.100V10.600H2.200V5.200H0.100Z" fill="#d42414"/><path d="M10.700 12.900L14.300 8.500H12.200V3.200H9.300V8.500H7.200Z" fill="#1c5cc8"/></svg>
<div class="t" style="left:183px;top:160px;line-height:16px;font-size:12px"><span class="k">이동평균</span>(<span class="k">단순</span>) Golden_Dead</div>
<div class="a" style="left:152px;top:184px;width:9px;height:0;border-top:1px dotted #808080"></div>
<svg class="a" style="left:163px;top:177px" width="16" height="15" viewBox="0 0 16 15"><path d="M3.600 0.800L7.100 5.200H5.100V10.600H2.200V5.200H0.100Z" fill="#d42414"/><path d="M10.700 12.900L14.300 8.500H12.200V3.200H9.300V8.500H7.200Z" fill="#1c5cc8"/></svg>
<div class="t" style="left:183px;top:176px;line-height:16px;font-size:12px"><span class="k">이동평균</span>(<span class="k">지수</span>) Golden_Dead</div>
<div class="a" style="left:152px;top:200px;width:9px;height:0;border-top:1px dotted #808080"></div>
<svg class="a" style="left:163px;top:193px" width="16" height="15" viewBox="0 0 16 15"><path d="M3.600 0.800L7.100 5.200H5.100V10.600H2.200V5.200H0.100Z" fill="#d42414"/><path d="M10.700 12.900L14.300 8.500H12.200V3.200H9.300V8.500H7.200Z" fill="#1c5cc8"/></svg>
<div class="t" style="left:183px;top:192px;line-height:16px;font-size:12px"><span class="k">일목균형</span></div>
<div class="a" style="left:152px;top:216px;width:9px;height:0;border-top:1px dotted #808080"></div>
<svg class="a" style="left:163px;top:209px" width="16" height="15" viewBox="0 0 16 15"><path d="M3.600 0.800L7.100 5.200H5.100V10.600H2.200V5.200H0.100Z" fill="#d42414"/><path d="M10.700 12.900L14.300 8.500H12.200V3.200H9.300V8.500H7.200Z" fill="#1c5cc8"/></svg>
<div class="t" style="left:183px;top:208px;line-height:16px;font-size:12px"><span class="k">일목균형</span>(ver2)</div>
<div class="a" style="left:152px;top:232px;width:9px;height:0;border-top:1px dotted #808080"></div>
<svg class="a" style="left:163px;top:225px" width="16" height="15" viewBox="0 0 16 15"><path d="M3.600 0.800L7.100 5.200H5.100V10.600H2.200V5.200H0.100Z" fill="#d42414"/><path d="M10.700 12.900L14.300 8.500H12.200V3.200H9.300V8.500H7.200Z" fill="#1c5cc8"/></svg>
<div class="t" style="left:183px;top:224px;line-height:16px;font-size:12px"><span class="k">파라볼릭</span></div>
<div class="a" style="left:152px;top:248px;width:9px;height:0;border-top:1px dotted #808080"></div>
<svg class="a" style="left:163px;top:241px" width="16" height="15" viewBox="0 0 16 15"><path d="M3.600 0.800L7.100 5.200H5.100V10.600H2.200V5.200H0.100Z" fill="#d42414"/><path d="M10.700 12.900L14.300 8.500H12.200V3.200H9.300V8.500H7.200Z" fill="#1c5cc8"/></svg>
<div class="t" style="left:183px;top:240px;line-height:16px;font-size:12px"><span class="k">파라볼릭</span>(<span class="k">종가</span>)</div>
<div class="a" style="left:152px;top:264px;width:9px;height:0;border-top:1px dotted #808080"></div>
<svg class="a" style="left:163px;top:257px" width="16" height="15" viewBox="0 0 16 15"><path d="M3.600 0.800L7.100 5.200H5.100V10.600H2.200V5.200H0.100Z" fill="#d42414"/><path d="M10.700 12.900L14.300 8.500H12.200V3.200H9.300V8.500H7.200Z" fill="#1c5cc8"/></svg>
<div class="t" style="left:183px;top:256px;line-height:16px;font-size:12px">AB Ratio</div>
<div class="a" style="left:152px;top:280px;width:9px;height:0;border-top:1px dotted #808080"></div>
<svg class="a" style="left:163px;top:273px" width="16" height="15" viewBox="0 0 16 15"><path d="M3.600 0.800L7.100 5.200H5.100V10.600H2.200V5.200H0.100Z" fill="#d42414"/><path d="M10.700 12.900L14.300 8.500H12.200V3.200H9.300V8.500H7.200Z" fill="#1c5cc8"/></svg>
<div class="t" style="left:183px;top:272px;line-height:16px;font-size:12px">Aroon</div>
<div class="a" style="left:152px;top:296px;width:9px;height:0;border-top:1px dotted #808080"></div>
<svg class="a" style="left:163px;top:289px" width="16" height="15" viewBox="0 0 16 15"><path d="M3.600 0.800L7.100 5.200H5.100V10.600H2.200V5.200H0.100Z" fill="#d42414"/><path d="M10.700 12.900L14.300 8.500H12.200V3.200H9.300V8.500H7.200Z" fill="#1c5cc8"/></svg>
<div class="t" style="left:183px;top:288px;line-height:16px;font-size:12px">BinaryWave</div>
<div class="a" style="left:152px;top:312px;width:9px;height:0;border-top:1px dotted #808080"></div>
<svg class="a" style="left:163px;top:305px" width="16" height="15" viewBox="0 0 16 15"><path d="M3.600 0.800L7.100 5.200H5.100V10.600H2.200V5.200H0.100Z" fill="#d42414"/><path d="M10.700 12.900L14.300 8.500H12.200V3.200H9.300V8.500H7.200Z" fill="#1c5cc8"/></svg>
<div class="t" style="left:183px;top:304px;line-height:16px;font-size:12px">BinaryWave MACD</div>
<div class="a" style="left:152px;top:328px;width:9px;height:0;border-top:1px dotted #808080"></div>
<svg class="a" style="left:163px;top:321px" width="16" height="15" viewBox="0 0 16 15"><path d="M3.600 0.800L7.100 5.200H5.100V10.600H2.200V5.200H0.100Z" fill="#d42414"/><path d="M10.700 12.900L14.300 8.500H12.200V3.200H9.300V8.500H7.200Z" fill="#1c5cc8"/></svg>
<div class="t" style="left:183px;top:320px;line-height:16px;font-size:12px">Boll Bands Bearish</div>
<div class="a" style="left:152px;top:344px;width:9px;height:0;border-top:1px dotted #808080"></div>
<svg class="a" style="left:163px;top:337px" width="16" height="15" viewBox="0 0 16 15"><path d="M3.600 0.800L7.100 5.200H5.100V10.600H2.200V5.200H0.100Z" fill="#d42414"/><path d="M10.700 12.900L14.300 8.500H12.200V3.200H9.300V8.500H7.200Z" fill="#1c5cc8"/></svg>
<div class="t" style="left:183px;top:336px;line-height:16px;font-size:12px">Boll Bands Bullish</div>
<div class="a" style="left:152px;top:360px;width:9px;height:0;border-top:1px dotted #808080"></div>
<svg class="a" style="left:163px;top:353px" width="16" height="15" viewBox="0 0 16 15"><path d="M3.600 0.800L7.100 5.200H5.100V10.600H2.200V5.200H0.100Z" fill="#d42414"/><path d="M10.700 12.900L14.300 8.500H12.200V3.200H9.300V8.500H7.200Z" fill="#1c5cc8"/></svg>
<div class="t" style="left:183px;top:352px;line-height:16px;font-size:12px">Bollinger Bands</div>
<div class="a" style="left:152px;top:376px;width:9px;height:0;border-top:1px dotted #808080"></div>
<svg class="a" style="left:163px;top:369px" width="16" height="15" viewBox="0 0 16 15"><path d="M3.600 0.800L7.100 5.200H5.100V10.600H2.200V5.200H0.100Z" fill="#d42414"/><path d="M10.700 12.900L14.300 8.500H12.200V3.200H9.300V8.500H7.200Z" fill="#1c5cc8"/></svg>
<div class="t" style="left:183px;top:368px;line-height:16px;font-size:12px">CCI <span class="k">과매도</span> <span class="k">과매수</span></div>
<div class="a" style="left:152px;top:392px;width:9px;height:0;border-top:1px dotted #808080"></div>
<svg class="a" style="left:163px;top:385px" width="16" height="15" viewBox="0 0 16 15"><path d="M3.600 0.800L7.100 5.200H5.100V10.600H2.200V5.200H0.100Z" fill="#d42414"/><path d="M10.700 12.900L14.300 8.500H12.200V3.200H9.300V8.500H7.200Z" fill="#1c5cc8"/></svg>
<div class="t" style="left:183px;top:384px;line-height:16px;font-size:12px">CCI <span class="k">기준선</span></div>
<div class="a" style="left:152px;top:408px;width:9px;height:0;border-top:1px dotted #808080"></div>
<svg class="a" style="left:163px;top:401px" width="16" height="15" viewBox="0 0 16 15"><path d="M3.600 0.800L7.100 5.200H5.100V10.600H2.200V5.200H0.100Z" fill="#d42414"/><path d="M10.700 12.900L14.300 8.500H12.200V3.200H9.300V8.500H7.200Z" fill="#1c5cc8"/></svg>
<div class="t" style="left:183px;top:400px;line-height:16px;font-size:12px">CCI Avg Cross</div>
<div class="a" style="left:152px;top:424px;width:9px;height:0;border-top:1px dotted #808080"></div>
<svg class="a" style="left:163px;top:417px" width="16" height="15" viewBox="0 0 16 15"><path d="M3.600 0.800L7.100 5.200H5.100V10.600H2.200V5.200H0.100Z" fill="#d42414"/><path d="M10.700 12.900L14.300 8.500H12.200V3.200H9.300V8.500H7.200Z" fill="#1c5cc8"/></svg>
<div class="t" style="left:183px;top:416px;line-height:16px;font-size:12px">CCI Bear Avg Cross</div>
<div class="a" style="left:152px;top:440px;width:9px;height:0;border-top:1px dotted #808080"></div>
<svg class="a" style="left:163px;top:433px" width="16" height="15" viewBox="0 0 16 15"><path d="M3.600 0.800L7.100 5.200H5.100V10.600H2.200V5.200H0.100Z" fill="#d42414"/><path d="M10.700 12.900L14.300 8.500H12.200V3.200H9.300V8.500H7.200Z" fill="#1c5cc8"/></svg>
<div class="t" style="left:183px;top:432px;line-height:16px;font-size:12px">CCI Bull Avg Cross</div>
<div class="a" style="left:152px;top:456px;width:9px;height:0;border-top:1px dotted #808080"></div>
<svg class="a" style="left:163px;top:449px" width="16" height="15" viewBox="0 0 16 15"><path d="M3.600 0.800L7.100 5.200H5.100V10.600H2.200V5.200H0.100Z" fill="#d42414"/><path d="M10.700 12.900L14.300 8.500H12.200V3.200H9.300V8.500H7.200Z" fill="#1c5cc8"/></svg>
<div class="t" style="left:183px;top:448px;line-height:16px;font-size:12px">CCI_MACD_DMI_Stochastics</div>
<div class="a" style="left:152px;top:472px;width:9px;height:0;border-top:1px dotted #808080"></div>
<svg class="a" style="left:163px;top:465px" width="16" height="15" viewBox="0 0 16 15"><path d="M3.600 0.800L7.100 5.200H5.100V10.600H2.200V5.200H0.100Z" fill="#d42414"/><path d="M10.700 12.900L14.300 8.500H12.200V3.200H9.300V8.500H7.200Z" fill="#1c5cc8"/></svg>
<div class="t" style="left:183px;top:464px;line-height:16px;font-size:12px">Chan BOut IntBar</div>
<div class="a" style="left:152px;top:488px;width:9px;height:0;border-top:1px dotted #808080"></div>
<svg class="a" style="left:163px;top:481px" width="16" height="15" viewBox="0 0 16 15"><path d="M3.600 0.800L7.100 5.200H5.100V10.600H2.200V5.200H0.100Z" fill="#d42414"/><path d="M10.700 12.900L14.300 8.500H12.200V3.200H9.300V8.500H7.200Z" fill="#1c5cc8"/></svg>
<div class="t" style="left:183px;top:480px;line-height:16px;font-size:12px">Chan Brk Out</div>
<div class="a" style="left:152px;top:504px;width:9px;height:0;border-top:1px dotted #808080"></div>
<svg class="a" style="left:163px;top:497px" width="16" height="15" viewBox="0 0 16 15"><path d="M3.600 0.800L7.100 5.200H5.100V10.600H2.200V5.200H0.100Z" fill="#d42414"/><path d="M10.700 12.900L14.300 8.500H12.200V3.200H9.300V8.500H7.200Z" fill="#1c5cc8"/></svg>
<div class="t" style="left:183px;top:496px;line-height:16px;font-size:12px">Chan Brk Under</div>
<div class="a" style="left:152px;top:520px;width:9px;height:0;border-top:1px dotted #808080"></div>
<svg class="a" style="left:163px;top:513px" width="16" height="15" viewBox="0 0 16 15"><path d="M3.600 0.800L7.100 5.200H5.100V10.600H2.200V5.200H0.100Z" fill="#d42414"/><path d="M10.700 12.900L14.300 8.500H12.200V3.200H9.300V8.500H7.200Z" fill="#1c5cc8"/></svg>
<div class="t" style="left:183px;top:512px;line-height:16px;font-size:12px">Chan BUnder IntBar</div>
<div class="a" style="left:152px;top:536px;width:9px;height:0;border-top:1px dotted #808080"></div>
<svg class="a" style="left:163px;top:529px" width="16" height="15" viewBox="0 0 16 15"><path d="M3.600 0.800L7.100 5.200H5.100V10.600H2.200V5.200H0.100Z" fill="#d42414"/><path d="M10.700 12.900L14.300 8.500H12.200V3.200H9.300V8.500H7.200Z" fill="#1c5cc8"/></svg>
<div class="t" style="left:183px;top:528px;line-height:16px;font-size:12px">Channel Breakout</div>
<div class="a" style="left:152px;top:552px;width:9px;height:0;border-top:1px dotted #808080"></div>
<svg class="a" style="left:163px;top:545px" width="16" height="15" viewBox="0 0 16 15"><path d="M3.600 0.800L7.100 5.200H5.100V10.600H2.200V5.200H0.100Z" fill="#d42414"/><path d="M10.700 12.900L14.300 8.500H12.200V3.200H9.300V8.500H7.200Z" fill="#1c5cc8"/></svg>
<div class="t" style="left:183px;top:544px;line-height:16px;font-size:12px">Channel Breakout Intra-Bar</div>
<div class="a" style="left:152px;top:568px;width:9px;height:0;border-top:1px dotted #808080"></div>
<svg class="a" style="left:163px;top:561px" width="16" height="15" viewBox="0 0 16 15"><path d="M3.600 0.800L7.100 5.200H5.100V10.600H2.200V5.200H0.100Z" fill="#d42414"/><path d="M10.700 12.900L14.300 8.500H12.200V3.200H9.300V8.500H7.200Z" fill="#1c5cc8"/></svg>
<div class="t" style="left:183px;top:560px;line-height:16px;font-size:12px">Dark Cloud</div>
<div class="a" style="left:152px;top:584px;width:9px;height:0;border-top:1px dotted #808080"></div>
<svg class="a" style="left:163px;top:577px" width="16" height="15" viewBox="0 0 16 15"><path d="M3.600 0.800L7.100 5.200H5.100V10.600H2.200V5.200H0.100Z" fill="#d42414"/><path d="M10.700 12.900L14.300 8.500H12.200V3.200H9.300V8.500H7.200Z" fill="#1c5cc8"/></svg>
<div class="t" style="left:183px;top:576px;line-height:16px;font-size:12px">DMI</div>
<div class="a" style="left:152px;top:600px;width:9px;height:0;border-top:1px dotted #808080"></div>
<svg class="a" style="left:163px;top:593px" width="16" height="15" viewBox="0 0 16 15"><path d="M3.600 0.800L7.100 5.200H5.100V10.600H2.200V5.200H0.100Z" fill="#d42414"/><path d="M10.700 12.900L14.300 8.500H12.200V3.200H9.300V8.500H7.200Z" fill="#1c5cc8"/></svg>
<div class="t" style="left:183px;top:592px;line-height:16px;font-size:12px">DMI Bearish</div>
<div class="a" style="left:152px;top:616px;width:9px;height:0;border-top:1px dotted #808080"></div>
<svg class="a" style="left:163px;top:609px" width="16" height="15" viewBox="0 0 16 15"><path d="M3.600 0.800L7.100 5.200H5.100V10.600H2.200V5.200H0.100Z" fill="#d42414"/><path d="M10.700 12.900L14.300 8.500H12.200V3.200H9.300V8.500H7.200Z" fill="#1c5cc8"/></svg>
<div class="t" style="left:183px;top:608px;line-height:16px;font-size:12px">DMI Bull_Bear</div>
<div class="a" style="left:152px;top:632px;width:9px;height:0;border-top:1px dotted #808080"></div>
<svg class="a" style="left:163px;top:625px" width="16" height="15" viewBox="0 0 16 15"><path d="M3.600 0.800L7.100 5.200H5.100V10.600H2.200V5.200H0.100Z" fill="#d42414"/><path d="M10.700 12.900L14.300 8.500H12.200V3.200H9.300V8.500H7.200Z" fill="#1c5cc8"/></svg>
<div class="t" style="left:183px;top:624px;line-height:16px;font-size:12px">DMI Bullish</div>
<div class="a" style="left:152px;top:648px;width:9px;height:0;border-top:1px dotted #808080"></div>
<svg class="a" style="left:163px;top:641px" width="16" height="15" viewBox="0 0 16 15"><path d="M3.600 0.800L7.100 5.200H5.100V10.600H2.200V5.200H0.100Z" fill="#d42414"/><path d="M10.700 12.900L14.300 8.500H12.200V3.200H9.300V8.500H7.200Z" fill="#1c5cc8"/></svg>
<div class="t" style="left:183px;top:640px;line-height:16px;font-size:12px">Engulfing Bull_Bear</div>
<div class="a" style="left:152px;top:664px;width:9px;height:0;border-top:1px dotted #808080"></div>
<svg class="a" style="left:163px;top:657px" width="16" height="15" viewBox="0 0 16 15"><path d="M3.600 0.800L7.100 5.200H5.100V10.600H2.200V5.200H0.100Z" fill="#d42414"/><path d="M10.700 12.900L14.300 8.500H12.200V3.200H9.300V8.500H7.200Z" fill="#1c5cc8"/></svg>
<div class="t" style="left:183px;top:656px;line-height:16px;font-size:12px">Engulfing(Bearish)</div>
<div class="a" style="left:152px;top:680px;width:9px;height:0;border-top:1px dotted #808080"></div>
<svg class="a" style="left:163px;top:673px" width="16" height="15" viewBox="0 0 16 15"><path d="M3.600 0.800L7.100 5.200H5.100V10.600H2.200V5.200H0.100Z" fill="#d42414"/><path d="M10.700 12.900L14.300 8.500H12.200V3.200H9.300V8.500H7.200Z" fill="#1c5cc8"/></svg>
<div class="t" style="left:183px;top:672px;line-height:16px;font-size:12px">Engulfing(Bullish)</div>
<div class="a" style="left:152px;top:696px;width:9px;height:0;border-top:1px dotted #808080"></div>
<svg class="a" style="left:163px;top:689px" width="16" height="15" viewBox="0 0 16 15"><path d="M3.600 0.800L7.100 5.200H5.100V10.600H2.200V5.200H0.100Z" fill="#d42414"/><path d="M10.700 12.900L14.300 8.500H12.200V3.200H9.300V8.500H7.200Z" fill="#1c5cc8"/></svg>
<div class="t" style="left:183px;top:688px;line-height:16px;font-size:12px">EOM</div>
<div class="a" style="left:152px;top:712px;width:9px;height:0;border-top:1px dotted #808080"></div>
<svg class="a" style="left:163px;top:705px" width="16" height="15" viewBox="0 0 16 15"><path d="M3.600 0.800L7.100 5.200H5.100V10.600H2.200V5.200H0.100Z" fill="#d42414"/><path d="M10.700 12.900L14.300 8.500H12.200V3.200H9.300V8.500H7.200Z" fill="#1c5cc8"/></svg>
<div class="t" style="left:183px;top:704px;line-height:16px;font-size:12px">Evening Star</div>
<div class="a" style="left:152px;top:728px;width:9px;height:0;border-top:1px dotted #808080"></div>
<svg class="a" style="left:163px;top:721px" width="16" height="15" viewBox="0 0 16 15"><path d="M3.600 0.800L7.100 5.200H5.100V10.600H2.200V5.200H0.100Z" fill="#d42414"/><path d="M10.700 12.900L14.300 8.500H12.200V3.200H9.300V8.500H7.200Z" fill="#1c5cc8"/></svg>
<div class="t" style="left:183px;top:720px;line-height:16px;font-size:12px">Golden_Dead Cross</div>
<div class="a" style="left:152px;top:744px;width:9px;height:0;border-top:1px dotted #808080"></div>
<svg class="a" style="left:163px;top:737px" width="16" height="15" viewBox="0 0 16 15"><path d="M3.600 0.800L7.100 5.200H5.100V10.600H2.200V5.200H0.100Z" fill="#d42414"/><path d="M10.700 12.900L14.300 8.500H12.200V3.200H9.300V8.500H7.200Z" fill="#1c5cc8"/></svg>
<div class="t" style="left:183px;top:736px;line-height:16px;font-size:12px">Golden_Dead Cross <span class="k">지수이동평균</span></div>
<div class="a" style="left:152px;top:760px;width:9px;height:0;border-top:1px dotted #808080"></div>
<svg class="a" style="left:163px;top:753px" width="16" height="15" viewBox="0 0 16 15"><path d="M3.600 0.800L7.100 5.200H5.100V10.600H2.200V5.200H0.100Z" fill="#d42414"/><path d="M10.700 12.900L14.300 8.500H12.200V3.200H9.300V8.500H7.200Z" fill="#1c5cc8"/></svg>
<div class="t" style="left:183px;top:752px;line-height:16px;font-size:12px">Hammer</div>
<div class="a" style="left:152px;top:776px;width:9px;height:0;border-top:1px dotted #808080"></div>
<svg class="a" style="left:163px;top:769px" width="16" height="15" viewBox="0 0 16 15"><path d="M3.600 0.800L7.100 5.200H5.100V10.600H2.200V5.200H0.100Z" fill="#d42414"/><path d="M10.700 12.900L14.300 8.500H12.200V3.200H9.300V8.500H7.200Z" fill="#1c5cc8"/></svg>
<div class="t" style="left:183px;top:768px;line-height:16px;font-size:12px">HangingMan</div>
<div class="a" style="left:152px;top:792px;width:9px;height:0;border-top:1px dotted #808080"></div>
<svg class="a" style="left:163px;top:785px" width="16" height="15" viewBox="0 0 16 15"><path d="M3.600 0.800L7.100 5.200H5.100V10.600H2.200V5.200H0.100Z" fill="#d42414"/><path d="M10.700 12.900L14.300 8.500H12.200V3.200H9.300V8.500H7.200Z" fill="#1c5cc8"/></svg>
<div class="t" style="left:183px;top:784px;line-height:16px;font-size:12px">Keltner Channel</div>
<div class="a" style="left:504px;top:144px;width:15px;height:658px;background:#ebe9e4;background-image:conic-gradient(#fff 25%,#d4d0c8 0 50%,#fff 0 75%,#d4d0c8 0);background-size:2px 2px"></div>
<div class="btn" style="left:504px;top:144px;width:15px;height:16px"><span class="a" style="left:3px;top:4px;width:0;height:0;border:4px solid transparent;border-bottom:4px solid #000;border-top:0"></span></div>
<div class="btn" style="left:504px;top:160px;width:15px;height:268px"></div>
<div class="btn" style="left:504px;top:788px;width:15px;height:16px"><span class="a" style="left:3px;top:5px;width:0;height:0;border:4px solid transparent;border-top:4px solid #000;border-bottom:0"></span></div>
<div class="a" style="left:519px;top:15px;width:3px;height:787px;background:#cecece"></div>
<div class="a" style="left:520px;top:15px;width:32px;height:23px;background:#b9bbbe"></div>
<div class="tb" style="left:524px;top:17px;width:7px;height:18px"><span class="a" style="left:1px;top:5px;width:0;height:0;border:3px solid transparent;border-left:4px solid #404040;border-right:0"></span></div>
<div class="a" style="left:534px;top:17px;width:1px;height:19px;background:#8c8c90"></div>
<div class="inp" style="left:539px;top:17px;width:20px;height:18px;padding-left:2px">6E</div>
<div class="a" style="left:523px;top:38px;width:29px;height:764px;background:#3c3c3c"></div>
<div class="vl" style="left:522px;top:38px;height:764px;width:1.300px"></div>
<div class="tick" style="left:523px;top:48px"></div>
<div class="tick" style="left:523px;top:65px"></div>
<div class="tick" style="left:523px;top:83px"></div>
<div class="tick" style="left:523px;top:101px"></div>
<div class="tick" style="left:523px;top:118px"></div>
<div class="tick" style="left:523px;top:136px"></div>
<div class="tick" style="left:523px;top:155px"></div>
<div class="tick" style="left:523px;top:173px"></div>
<div class="tick" style="left:523px;top:191px"></div>
<div class="tick" style="left:523px;top:210px"></div>
<div class="tick" style="left:523px;top:228px"></div>
<div class="tick" style="left:523px;top:245px"></div>
<div class="tick" style="left:523px;top:263px"></div>
<div class="tick" style="left:523px;top:281px"></div>
<div class="tick" style="left:523px;top:298px"></div>
<div class="tick" style="left:523px;top:317px"></div>
<div class="tick" style="left:523px;top:335px"></div>
<div class="tick" style="left:523px;top:352px"></div>
<div class="tick" style="left:523px;top:370px"></div>
<div class="tick" style="left:523px;top:388px"></div>
<div class="tick" style="left:523px;top:432px"></div>
<div class="tick" style="left:523px;top:458px"></div>
<div class="tick" style="left:523px;top:487px"></div>
<div class="tick" style="left:523px;top:531px"></div>
<div class="tick" style="left:523px;top:547px"></div>
<div class="tick" style="left:523px;top:563px"></div>
<div class="tick" style="left:523px;top:579px"></div>
<div class="tick" style="left:523px;top:595px"></div>
<div class="tick" style="left:523px;top:641px"></div>
<div class="tick" style="left:523px;top:672px"></div>
<div class="tick" style="left:523px;top:702px"></div>
<div class="tick" style="left:523px;top:737px"></div>
<div class="tick" style="left:523px;top:771px"></div>
<div class="lab" style="left:529px;top:76px;width:23px;background:#20e8e8;color:#d0ffff">1.06</div>
<div class="cb" style="left:531px;top:452px">0.0</div>
<div class="cb" style="left:531px;top:481px">0.0</div>
<div class="cb" style="left:531px;top:541px">0.0</div>
<div class="cb" style="left:531px;top:598px">-0</div>
<div class="cb" style="left:531px;top:635px">0.0</div>
<div class="cb" style="left:531px;top:666px">0.0</div>
<div class="cb" style="left:531px;top:696px">0.0</div>
<div class="cb" style="left:531px;top:765px">0.0</div>
<div class="lab" style="left:529px;top:573px;width:23px;background:#c0c0c0;color:#fff">0.00</div>
<div class="a" style="left:524px;top:499px;width:30px;height:13px;box-sizing:border-box;border:1px solid #fff;border-right:0"></div><div class="cb" style="left:526px;top:500px;line-height:12px">x100</div>
<div class="a" style="left:524px;top:608px;width:30px;height:13px;box-sizing:border-box;border:1px solid #fff;border-right:0"></div><div class="cb" style="left:526px;top:609px;line-height:12px">x100</div>
<div class="a" style="left:524px;top:717px;width:30px;height:13px;box-sizing:border-box;border:1px solid #fff;border-right:0"></div><div class="cb" style="left:526px;top:718px;line-height:12px">x100</div>
<div class="vtb" style="left:551px;top:14px;width:28px;height:788px"></div><svg class="ic" style="left:556px;top:18px" viewBox="0 0 18 18"><rect x="0.5" y="0.5" width="17" height="17" fill="#d6d3ce" stroke="#7c7c7c"/><path d="M1.5 16.5V1.5H16.5" fill="none" stroke="#fff"/><path d="M17 1V17H1Z" fill="#a8a8a8"/><path d="M11.200 3.200C8.500 2.600 6 3.800 5.300 6.500" fill="none" stroke="#0000a8" stroke-width="2.200"/><path d="M3.200 10L2.600 4.800L8.300 7.600Z" fill="#0000a8"/><path d="M6.800 14.800C9.500 15.400 12 14.200 12.700 11.500" fill="none" stroke="#0000a8" stroke-width="2.200"/><path d="M14.800 8L15.400 13.200L9.700 10.400Z" fill="#0000a8"/></svg><svg class="ic" style="left:556px;top:43px" viewBox="0 0 18 18"><rect x="0.5" y="0.5" width="17" height="17" fill="#d6d3ce" stroke="#7c7c7c"/><path d="M1.5 16.5V1.5H16.5" fill="none" stroke="#fff"/><rect x="2" y="2" width="14" height="14" fill="#e6d8f2"/><rect x="7" y="3" width="4" height="12" fill="#f4b8c8"/><rect x="2.600" y="2.600" width="4.300" height="12.800" rx="1" fill="#fff" stroke="#28289c" stroke-width="1.200"/><rect x="11.100" y="2.600" width="4.300" height="12.800" rx="1" fill="#fff" stroke="#28289c" stroke-width="1.200"/><path d="M4 5.500H5.500M4 8V10.500M5.500 8V10.500M4 13H5.500M12.500 5.500H14M12.500 8V10.500M14 8V10.500M12.500 13H14" stroke="#28289c" stroke-width="0.900" fill="none"/><path d="M7.500 6H10.500M7.500 12.500H10.500" stroke="#e01818" stroke-width="1.600"/><path d="M8.200 8.200H9.800V10.200H8.200Z" fill="#e01818"/></svg><svg class="a" style="left:553px;top:66px" width="24" height="23" viewBox="0 0 24 23"><rect x="0" y="0" width="24" height="23" fill="url(#dz)"/><path d="M0.500 22.500V0.500H23.500" fill="none" stroke="#808080"/><path d="M23.500 0.500V22.500H0.500" fill="none" stroke="#fff"/><rect x="4.500" y="3.500" width="17" height="17" fill="url(#dz)" stroke="#7c7c7c"/><g transform="translate(4,3)"><path d="M4.500 1.500V14L7.500 11.200L9.800 16L12 15L9.800 10.400H13.500Z" fill="#00008c"/></g></svg><svg class="ic" style="left:556px;top:93px" viewBox="0 0 18 18"><rect x="0.500" y="0.500" width="17" height="17" fill="#b4b4b4" stroke="#8c8c8c"/><path d="M2.500 1.500V15.500H16.500" fill="none" stroke="#f4f4f4"/><g transform="translate(1,1)" fill="none" stroke="#fff" stroke-width="1.2"><path d="M3 14L14 3M3.5 3.5H7.5M3.5 3.5V7H7.5M10.5 14V10H14V12.5H10.5"/><rect x="2.5" y="12.5" width="2" height="2"/><rect x="12.5" y="2.5" width="2" height="2"/></g><g fill="none" stroke="#808080" stroke-width="1.2"><path d="M3 14L14 3M3.5 3.5H7.5M3.5 3.5V7H7.5M10.5 14V10H14V12.5H10.5"/><rect x="2.5" y="12.5" width="2" height="2"/><rect x="12.5" y="2.5" width="2" height="2"/></g></svg><svg class="ic" style="left:556px;top:118px" viewBox="0 0 18 18"><rect x="0.500" y="0.500" width="17" height="17" fill="#b4b4b4" stroke="#8c8c8c"/><path d="M2.500 1.500V15.500H16.500" fill="none" stroke="#f4f4f4"/><g transform="translate(1,1)" fill="none" stroke="#fff" stroke-width="1.2"><path d="M2.5 4L5 7L9 2.5M4.5 12L8.5 7.5H13.5L10 12ZM4.5 12V15H10V12M10 15L13.5 10.5V7.5"/></g><g fill="none" stroke="#808080" stroke-width="1.2"><path d="M2.5 4L5 7L9 2.5M4.5 12L8.5 7.5H13.5L10 12ZM4.5 12V15H10V12M10 15L13.5 10.5V7.5"/></g></svg><svg class="ic" style="left:556px;top:143px" viewBox="0 0 18 18"><rect x="0.500" y="0.500" width="17" height="17" fill="#b4b4b4" stroke="#8c8c8c"/><path d="M2.500 1.500V15.500H16.500" fill="none" stroke="#f4f4f4"/><g transform="translate(1,1)" fill="none" stroke="#fff" stroke-width="1.2"><path d="M3 3V9M5.5 3V7M8 3V7M10.5 3V7M3 5H11M4.5 12L8.5 7.5H13.5L10 12ZM4.5 12V15H10V12M10 15L13.5 10.5V7.5"/></g><g fill="none" stroke="#808080" stroke-width="1.2"><path d="M3 3V9M5.5 3V7M8 3V7M10.5 3V7M3 5H11M4.5 12L8.5 7.5H13.5L10 12ZM4.5 12V15H10V12M10 15L13.5 10.5V7.5"/></g></svg><svg class="ic" style="left:556px;top:168px" viewBox="0 0 18 18"><rect x="0.5" y="0.5" width="17" height="17" fill="#d6d3ce" stroke="#7c7c7c"/><path d="M1.5 16.5V1.5H16.5" fill="none" stroke="#fff"/><rect x="2" y="2" width="14" height="14" fill="#e0daf0"/><path d="M2.500 2.500V15.500H15.500" fill="none" stroke="#1818b0"/><path d="M8.5 3V13" stroke="#d81818" stroke-width="1.4"/><path d="M4.5 7L7 4.5L8 6M9.500 13L15 7.500" fill="none" stroke="#000" stroke-width="1.2"/></svg><svg class="ic" style="left:556px;top:193px" viewBox="0 0 18 18"><rect x="0.5" y="0.5" width="17" height="17" fill="#d6d3ce" stroke="#7c7c7c"/><path d="M1.5 16.5V1.5H16.5" fill="none" stroke="#fff"/><path d="M4 9.500H14" stroke="#1818b0" stroke-width="1"/><rect x="3" y="8" width="3" height="3" fill="#d81818"/><rect x="12" y="8" width="3" height="3" fill="#d81818"/></svg><svg class="ic" style="left:556px;top:218px" viewBox="0 0 18 18"><rect x="0.5" y="0.5" width="17" height="17" fill="#d6d3ce" stroke="#7c7c7c"/><path d="M1.5 16.5V1.5H16.5" fill="none" stroke="#fff"/><path d="M8.5 4V14" stroke="#1818b0" stroke-width="1.2"/><rect x="7" y="3" width="3" height="3" fill="#d81818"/><rect x="7" y="12" width="3" height="3" fill="#d81818"/></svg><svg class="ic" style="left:556px;top:243px" viewBox="0 0 18 18"><rect x="0.5" y="0.5" width="17" height="17" fill="#d6d3ce" stroke="#7c7c7c"/><path d="M1.5 16.5V1.5H16.5" fill="none" stroke="#fff"/><path d="M4.500 12V15.500H12.500V10" fill="none" stroke="#1818b0" stroke-width="1.2"/><path d="M5.500 5V12" stroke="#1818b0"/><rect x="4" y="7" width="3" height="5" fill="#1818b0"/><path d="M12.500 2V10" stroke="#d81818"/><rect x="11" y="3" width="3" height="3.500" fill="#d81818"/></svg><svg class="ic" style="left:556px;top:268px" viewBox="0 0 18 18"><rect x="0.5" y="0.5" width="17" height="17" fill="#d6d3ce" stroke="#7c7c7c"/><path d="M1.5 16.5V1.5H16.5" fill="none" stroke="#fff"/><path d="M4.5 13.500L13.500 4.500" stroke="#1818b0" stroke-width="1.2"/><rect x="3" y="12" width="3" height="3" fill="#d81818"/><rect x="12" y="3" width="3" height="3" fill="#d81818"/></svg><svg class="ic" style="left:556px;top:293px" viewBox="0 0 18 18"><rect x="0.5" y="0.5" width="17" height="17" fill="#d6d3ce" stroke="#7c7c7c"/><path d="M1.5 16.5V1.5H16.5" fill="none" stroke="#fff"/><path d="M3 15L15 3" stroke="#1818b0" stroke-width="1.2"/><text x="2.500" y="9" font-size="8" font-family="Liberation Sans,sans-serif" font-weight="bold" fill="#d81818">A</text><text x="10" y="15.500" font-size="8" font-family="Liberation Sans,sans-serif" font-weight="bold" fill="#d81818">T</text></svg><svg class="ic" style="left:556px;top:318px" viewBox="0 0 18 18"><rect x="0.5" y="0.5" width="17" height="17" fill="#d6d3ce" stroke="#7c7c7c"/><path d="M1.5 16.5V1.5H16.5" fill="none" stroke="#fff"/><rect x="2" y="2" width="14" height="14" fill="#e4e0f4"/><path d="M3 3.500H15M5 5.500H15M7 7.500H15" stroke="#d81818" stroke-width="1.1"/><path d="M7 10.500H15M5 12.500H15M3 14.500H15" stroke="#1818b0" stroke-width="1.1"/></svg><svg class="ic" style="left:556px;top:343px" viewBox="0 0 18 18"><rect x="0.5" y="0.5" width="17" height="17" fill="#d6d3ce" stroke="#7c7c7c"/><path d="M1.5 16.5V1.5H16.5" fill="none" stroke="#fff"/><rect x="2" y="2" width="14" height="14" fill="#e4e0f4"/><text x="2.500" y="10" font-size="10" textLength="12" lengthAdjust="spacingAndGlyphs" font-family="Liberation Sans,sans-serif" font-weight="bold" fill="#d81818">f/L</text><path d="M4.500 11.500V16M7.500 11.500V16M10.500 11.500V16M13.500 11.500V16" stroke="#1818b0" stroke-width="1.300"/></svg><svg class="ic" style="left:556px;top:368px" viewBox="0 0 18 18"><rect x="0.5" y="0.5" width="17" height="17" fill="#d6d3ce" stroke="#7c7c7c"/><path d="M1.5 16.5V1.5H16.5" fill="none" stroke="#fff"/><rect x="2" y="2" width="14" height="14" fill="#e4e0f4"/><text x="3" y="10" font-size="10" textLength="11" lengthAdjust="spacingAndGlyphs" font-family="Liberation Sans,sans-serif" font-weight="bold" fill="#d81818">f/f</text><path d="M3 13H6.500M5 15.500C8 15.500 9 11.500 12 11.500S15 14 12.500 14.500C10 15 9 13 11 12.500" fill="none" stroke="#1818b0" stroke-width="1.1"/></svg><svg class="ic" style="left:556px;top:393px" viewBox="0 0 18 18"><rect x="0.5" y="0.5" width="17" height="17" fill="#d6d3ce" stroke="#7c7c7c"/><path d="M1.5 16.5V1.5H16.5" fill="none" stroke="#fff"/><rect x="2" y="2" width="14" height="14" fill="#e4e0f4"/><text x="3" y="8" font-size="8" font-family="Liberation Sans,sans-serif" font-weight="bold" fill="#d81818">f</text><circle cx="13" cy="6" r="1.8" fill="none" stroke="#d81818" stroke-width="1.1"/><path d="M11 2.500L8 9" stroke="#d81818" stroke-width="1.2"/><path d="M2.500 14.500C5 11 7 10 9 8.500M4.500 15.500C6 12 8 10.500 9.500 9M9 8.500C11 10 13 11.500 15.500 14.500M9.500 10C11 11.500 12 13 13.500 15.500" fill="none" stroke="#101090" stroke-width="1.3"/></svg><svg class="ic" style="left:556px;top:418px" viewBox="0 0 18 18"><rect x="0.5" y="0.5" width="17" height="17" fill="#d6d3ce" stroke="#7c7c7c"/><path d="M1.5 16.5V1.5H16.5" fill="none" stroke="#fff"/><rect x="2" y="2" width="14" height="14" fill="#e4e0f4"/><text x="2.500" y="10" font-size="10" textLength="13" lengthAdjust="spacingAndGlyphs" font-family="Liberation Sans,sans-serif" font-weight="bold" fill="#d81818">f/R</text><path d="M3 10.500H15M3 14.500H15" stroke="#1818b0" stroke-width="1.2"/><path d="M3 12.500H15" stroke="#1818b0" stroke-width="1.2" stroke-dasharray="3 1"/></svg><svg class="ic" style="left:556px;top:443px" viewBox="0 0 18 18"><rect x="0.5" y="0.5" width="17" height="17" fill="#d6d3ce" stroke="#7c7c7c"/><path d="M1.5 16.5V1.5H16.5" fill="none" stroke="#fff"/><path d="M3 9.500L10 2.500M3 15.500L15 3.500M4 9L10 15L15 9.500" fill="none" stroke="#1818b0" stroke-width="1"/></svg><svg class="ic" style="left:556px;top:468px" viewBox="0 0 18 18"><rect x="0.5" y="0.5" width="17" height="17" fill="#d6d3ce" stroke="#7c7c7c"/><path d="M1.5 16.5V1.5H16.5" fill="none" stroke="#fff"/><path d="M3 14L8.500 8.500L11.500 11.500L16 7" fill="none" stroke="#1818b0" stroke-width="1.2"/><text x="2.500" y="8" font-size="7.500" font-family="Liberation Sans,sans-serif" font-weight="bold" fill="#d81818">E</text><path d="M7 9.500L8.500 7L10 9.500Z" fill="#d81818"/><circle cx="3.500" cy="14" r="1.300" fill="#d81818"/><path d="M5.500 12L6.500 11" stroke="#d81818"/></svg><svg class="ic" style="left:556px;top:493px" viewBox="0 0 18 18"><rect x="0.5" y="0.5" width="17" height="17" fill="#d6d3ce" stroke="#7c7c7c"/><path d="M1.5 16.5V1.5H16.5" fill="none" stroke="#fff"/><path d="M3 14L8.500 8.500L11.500 11.500L16 7" fill="none" stroke="#1818b0" stroke-width="1.2"/><text x="2.500" y="8" font-size="7.500" font-family="Liberation Sans,sans-serif" font-weight="bold" fill="#d81818">E</text><path d="M7 9.500L8.500 7L10 9.500Z" fill="#d81818"/><circle cx="3.500" cy="14" r="1.300" fill="#d81818"/><path d="M5.500 12L6.500 11" stroke="#d81818"/><path d="M10.200 10.500H13L11.500 13Z" fill="#d81818"/></svg><svg class="ic" style="left:556px;top:518px" viewBox="0 0 18 18"><rect x="0.5" y="0.5" width="17" height="17" fill="#d6d3ce" stroke="#7c7c7c"/><path d="M1.5 16.5V1.5H16.5" fill="none" stroke="#fff"/><text x="2.500" y="8.500" font-size="8" font-family="Liberation Sans,sans-serif" font-weight="bold" fill="#d81818">L</text><path d="M6.500 10.500V16M9.500 8V14M12.500 5V12M14.500 3V10" fill="none" stroke="#a01858" stroke-width="1.300"/><path d="M3.500 16L15 5.500" fill="none" stroke="#1818b0" stroke-width="1"/></svg><svg class="ic" style="left:556px;top:543px" viewBox="0 0 18 18"><rect x="0.5" y="0.5" width="17" height="17" fill="#d6d3ce" stroke="#7c7c7c"/><path d="M1.5 16.5V1.5H16.5" fill="none" stroke="#fff"/><path d="M7.500 7.500V15M10.500 5V13.500M13.500 3V11M15.500 3V8" fill="none" stroke="#a01858" stroke-width="1.300"/><path d="M2.500 14L14.500 2.500M6 15.500L16 6.500" fill="none" stroke="#1818b0" stroke-width="1"/><text x="2" y="8" font-size="7.500" font-family="Liberation Sans,sans-serif" font-weight="bold" fill="#d81818">D</text></svg><svg class="ic" style="left:556px;top:568px" viewBox="0 0 18 18"><rect x="0.5" y="0.5" width="17" height="17" fill="#d6d3ce" stroke="#7c7c7c"/><path d="M1.5 16.5V1.5H16.5" fill="none" stroke="#fff"/><path d="M7.500 7.500V15M10.500 5V13.500M13.500 3V11M15.500 3V8" fill="none" stroke="#a01858" stroke-width="1.300"/><path d="M2.500 14L14.500 2.500M6 15.500L16 6.500" fill="none" stroke="#1818b0" stroke-width="1"/><text x="2" y="8" font-size="7.500" font-family="Liberation Sans,sans-serif" font-weight="bold" fill="#d81818">E</text></svg><svg class="ic" style="left:556px;top:593px" viewBox="0 0 18 18"><rect x="0.5" y="0.5" width="17" height="17" fill="#d6d3ce" stroke="#7c7c7c"/><path d="M1.5 16.5V1.5H16.5" fill="none" stroke="#fff"/><path d="M7.500 7.500V15M10.500 5V13.500M13.500 3V11M15.500 3V8" fill="none" stroke="#a01858" stroke-width="1.300"/><path d="M2.500 14L14.500 2.500M6 15.500L16 6.500" fill="none" stroke="#1818b0" stroke-width="1"/><text x="2" y="8" font-size="7.500" font-family="Liberation Sans,sans-serif" font-weight="bold" fill="#d81818">R</text></svg><svg class="ic" style="left:556px;top:618px" viewBox="0 0 18 18"><rect x="0.5" y="0.5" width="17" height="17" fill="#d6d3ce" stroke="#7c7c7c"/><path d="M1.5 16.5V1.5H16.5" fill="none" stroke="#fff"/><rect x="2" y="2" width="14" height="14" fill="#e4e0f4"/><path d="M3 3.500H15M3 14.500H15M9.500 7.500H15" stroke="#1818b0" stroke-width="1.2"/><path d="M9.500 10.500H15" stroke="#1818b0" stroke-width="1.2" stroke-dasharray="2 1"/><text x="2.500" y="12" font-size="8.500" font-family="Liberation Sans,sans-serif" font-weight="bold" fill="#d81818">Q</text></svg><svg class="ic" style="left:556px;top:643px" viewBox="0 0 18 18"><rect x="0.5" y="0.5" width="17" height="17" fill="#d6d3ce" stroke="#7c7c7c"/><path d="M1.5 16.5V1.5H16.5" fill="none" stroke="#fff"/><text x="9" y="15" font-size="17" font-family="Liberation Serif,serif" font-weight="bold" fill="#2828c8" text-anchor="middle">T</text></svg><svg class="ic" style="left:556px;top:668px" viewBox="0 0 18 18"><rect x="0.5" y="0.5" width="17" height="17" fill="#d6d3ce" stroke="#7c7c7c"/><path d="M1.5 16.5V1.5H16.5" fill="none" stroke="#fff"/><path d="M9 3L15 9.500H11.500V15H6.500V9.500H3Z" fill="#2828d0"/></svg><svg class="ic" style="left:556px;top:693px" viewBox="0 0 18 18"><rect x="0.5" y="0.5" width="17" height="17" fill="#d6d3ce" stroke="#7c7c7c"/><path d="M1.5 16.5V1.5H16.5" fill="none" stroke="#fff"/><path d="M9 15L15 8.500H11.500V3H6.500V8.500H3Z" fill="#2828d0"/></svg><svg class="ic" style="left:556px;top:718px" viewBox="0 0 18 18"><rect x="0.5" y="0.5" width="17" height="17" fill="#d6d3ce" stroke="#7c7c7c"/><path d="M1.5 16.5V1.5H16.5" fill="none" stroke="#fff"/><rect x="2" y="2" width="14" height="14" fill="#e4e0f4"/><rect x="3.500" y="3.500" width="11" height="11" fill="#f05858" stroke="#2020a0" stroke-width="1"/><rect x="4.500" y="4.500" width="9" height="9" fill="none" stroke="#f4d0e0" stroke-width="1"/></svg><svg class="ic" style="left:556px;top:743px" viewBox="0 0 18 18"><rect x="0.5" y="0.5" width="17" height="17" fill="#d6d3ce" stroke="#7c7c7c"/><path d="M1.5 16.5V1.5H16.5" fill="none" stroke="#fff"/><circle cx="9" cy="9" r="5.800" fill="#f4d0e0" stroke="#2020a0" stroke-width="1"/><circle cx="9" cy="9" r="4.300" fill="#f05858"/></svg><svg class="ic" style="left:556px;top:768px" viewBox="0 0 18 18"><rect x="0.5" y="0.5" width="17" height="17" fill="#d6d3ce" stroke="#7c7c7c"/><path d="M1.5 16.5V1.5H16.5" fill="none" stroke="#fff"/><circle cx="9" cy="9" r="5.800" fill="#fff" stroke="#2020a0" stroke-width="1"/><path d="M5.500 9L9 12.500L12.500 9" fill="none" stroke="#2020a0" stroke-width="1.1"/><rect x="6.500" y="6.500" width="1.200" height="1.200" fill="#2020a0"/><rect x="10.300" y="6.500" width="1.200" height="1.200" fill="#2020a0"/></svg><svg class="ic" style="left:556px;top:793px" viewBox="0 0 18 18"><rect x="0.5" y="0.5" width="17" height="17" fill="#d6d3ce" stroke="#7c7c7c"/><path d="M1.5 16.5V1.5H16.5" fill="none" stroke="#fff"/><circle cx="9" cy="9" r="5.800" fill="#fff" stroke="#2020a0" stroke-width="1"/><path d="M9 5V9H12" fill="none" stroke="#000" stroke-width="1.2"/></svg>
<div class="a" style="left:579px;top:0;width:1px;height:802px;background:#808080"></div>
<div class="wb" style="left:536px;top:0px"><div class="a" style="left:2px;top:7px;width:5px;height:2px;background:#000"></div></div><div class="wb" style="left:550px;top:0px"><div class="a" style="left:2px;top:1px;width:6px;height:7px;box-sizing:border-box;border:1px solid #000;border-top-width:2px"></div></div><div class="wb" style="left:564px;top:0px"><svg class="a" style="left:1px;top:1px" width="8" height="8"><path d="M1.5 1.5L6.5 6.5M6.5 1.5L1.5 6.5" stroke="#000" stroke-width="1.6"/></svg></div>
<div class="bar" style="left:580px;top:0;width:420px;height:14px;background:#d8d8d8"></div>
<div class="a" style="left:580px;top:13px;width:420px;height:2px;background:#303030"></div>
<svg class="a" style="left:580px;top:0" width="230" height="14"><path d="M1 0H216L222 14H1Z" fill="#f6f6f6"/><path d="M216 0L222 14" stroke="#303030" stroke-width="1.2"/></svg>
<div class="t" style="left:584px;top:0px;color:#000;font-size:12px;line-height:13px;letter-spacing:-0.050px;word-spacing:0">[3010] Euro FX-201703 - 30<span class="k">분</span></div>
<svg class="a" style="left:752px;top:2px" width="22" height="10"><path d="M1 5L5 1.500V3.500H9.500V6.500H5V8.500ZM21 5L17 1.500V3.500H12.500V6.500H17V8.500Z" fill="none" stroke="#303030" stroke-width="1"/></svg>
<svg class="a" style="left:778px;top:2px" width="10" height="10"><path d="M1 1L9 9M9 1L1 9" stroke="#a0a0a0" stroke-width="2"/></svg>
<div class="a" style="left:580px;top:15px;width:395px;height:23px;background:#b9bbbe"></div>
<div class="tb" style="left:580px;top:17px;width:6px;height:18px"><span class="a" style="left:0px;top:5px;width:0;height:0;border:3px solid transparent;border-right:4px solid #404040;border-left:0"></span></div>
<div class="a" style="left:590px;top:17px;width:1px;height:19px;background:#8c8c90"></div>
<div class="inp" style="left:594px;top:17px;width:108px;height:18px;padding-left:3px">6EH17<span class="a" style="right:7px;top:6px;width:0;height:0;border:4px solid transparent;border-top:4px solid #000;border-bottom:0"></span></div>
<div class="tb" style="left:705px;top:17px;width:19px;height:18px"><svg class="a" style="left:1px;top:0px" width="15" height="15"><circle cx="7" cy="6.500" r="4.200" fill="#ececec" stroke="#484848" stroke-width="1.300"/><path d="M10 9.500L14 14" stroke="#383838" stroke-width="2.200"/></svg></div>
<div class="tb" style="left:727px;top:17px;width:19px;height:18px"><svg class="a" style="left:1px;top:0px" width="15" height="15"><circle cx="7" cy="6.500" r="4.200" fill="#ececec" stroke="#484848" stroke-width="1.300"/><path d="M13 13L14.500 14.500" stroke="#383838" stroke-width="2.200"/><path d="M8 10L12 7V8.800H15.500V11.500H12V13Z" fill="#e81010"/></svg></div>
<div class="a" style="left:749px;top:17px;width:1px;height:19px;background:#8c8c90"></div>
<div class="tb" style="left:754px;top:17px;width:19px;height:18px"><span class="k">일</span></div>
<div class="tb" style="left:777px;top:17px;width:20px;height:18px"><span class="k">주</span></div>
<div class="tb" style="left:800px;top:17px;width:19px;height:18px"><span class="k">월</span></div>
<div class="tb on" style="left:821px;top:17px;width:20px;height:18px"><span class="k">분</span></div>
<div class="inp" style="left:842px;top:17px;width:44px;height:18px;padding-left:3px">30<span class="a" style="right:6px;top:6px;width:0;height:0;border:4px solid transparent;border-top:4px solid #000;border-bottom:0"></span></div>
<div class="tb" style="left:889px;top:17px;width:18px;height:18px"><span class="k">틱</span></div>
<div class="inp" style="left:910px;top:17px;width:54px;height:18px">10<span class="a" style="right:6px;top:6px;width:0;height:0;border:4px solid transparent;border-top:4px solid #000;border-bottom:0"></span></div>
<div class="a" style="left:967px;top:17px;width:1px;height:19px;background:#8c8c90"></div>
<div class="a" style="left:972px;top:17px;width:1px;height:19px;background:#dcdcdc"></div>
<div class="cb" style="left:581px;top:40px;width:325px;overflow:hidden;word-spacing:2.600px;text-indent:-3px">Euro FX-201703(30<span style="padding:0 1px"><span class="k">분</span></span>) 01/12 13:30</div>
<div class="cb" style="left:810px;top:40px"><span class="k">종</span></div>
<div class="cb" style="left:828px;top:40px">1.06345</div>
<div class="cb" style="left:880px;top:40px;color:#2020c0">-0.0</div>
<div class="a" style="left:897px;top:39px;width:12px;height:14px;background:#3c3c3c"></div>
<div class="pb" style="left:897px;top:41px;width:7px;height:7px"></div>
<div class="cb" style="left:776px;top:53px;color:#b01010">H: -0.15%</div>
<div class="cb" style="left:850px;top:53px;color:#1010a8">L: 1.47%</div>
<div class="vl" style="left:907px;top:38px;height:764px"></div>
<div class="tick" style="left:908px;top:44px"></div>
<div class="cb" style="left:917px;top:88px">1.07000</div>
<svg class="a" style="left:0;top:0" width="1065" height="802" viewBox="0 0 1065 802"><path d="M777 89C785 80 795 75 806 74.500S822 78 829 91" fill="none" stroke="#fff" stroke-width="1" stroke-dasharray="2 3"/><path d="M580 465.5H858" stroke="#fff" stroke-width="1" stroke-dasharray="3 3"/><path d="M580 481.5H858" stroke="#fff" stroke-width="1" stroke-dasharray="3 3"/><path d="M580 496.5H858" stroke="#fff" stroke-width="1" stroke-dasharray="3 3"/><polyline points="580.0,477.0 600.0,487.0 620.0,494.0 650.0,499.0 680.0,500.0 700.0,494.0 720.0,482.0 740.0,470.0 770.0,467.0 800.0,466.0 830.0,472.0 845.0,470.0 858.0,468.0" fill="none" stroke="#30d040" stroke-width="1" stroke-linejoin="round"/><polyline points="580.0,480.0 595.0,489.0 610.0,496.0 630.0,501.0 660.0,500.0 680.0,497.0 695.0,488.0 710.0,474.0 722.0,465.0 740.0,463.0 770.0,464.0 800.0,465.0 815.0,472.0 830.0,476.0 845.0,472.0 858.0,464.0" fill="none" stroke="#20e0e0" stroke-width="1" stroke-linejoin="round"/><polyline points="580.0,478.0 600.0,487.0 620.0,493.0 640.0,497.0 655.0,496.0 672.0,503.0 685.0,497.0 700.0,480.0 710.0,464.0 718.0,448.0" fill="none" stroke="#fff" stroke-width="1" stroke-linejoin="round"/><polyline points="786.0,450.0 800.0,458.0 815.0,466.0 830.0,474.0 845.0,473.0 858.0,471.0" fill="none" stroke="#fff" stroke-width="1" stroke-linejoin="round"/><polyline points="580.7,481.7 604.0,490.8 625.0,496.0 635.0,495.0 642.0,492.5 650.0,494.0 656.0,498.6 669.0,505.0 679.7,498.6 692.7,481.7 703.0,462.0 710.0,448.0" fill="none" stroke="#e020e0" stroke-width="2.8" stroke-linejoin="round"/><polyline points="775.0,448.0 790.0,454.0 805.0,461.0 815.0,468.0 830.0,475.0 845.0,474.0 858.0,473.0" fill="none" stroke="#e020e0" stroke-width="2.8" stroke-linejoin="round"/><path d="M580 566.5H858" stroke="#c8c8c8" stroke-width="1" stroke-dasharray="9 4 3 4"/><polyline points="580.7,558.5 588.5,549.4 600.0,553.0 612.0,557.0 627.6,550.7 643.0,558.5 658.9,549.4 668.0,539.0 674.5,546.8 683.6,566.3" fill="none" stroke="#d81010" stroke-width="3" stroke-linejoin="round"/><polyline points="683.6,566.3 692.7,575.4 699.2,578.0 707.0,571.5 708.3,567.0" fill="none" stroke="#20e0e0" stroke-width="2.2" stroke-linejoin="round"/><polyline points="708.3,567.6 714.8,537.7 724.0,532.4 731.8,545.5 739.6,552.5 752.6,556.7 770.8,557.2 783.9,561.0 795.6,565.5" fill="none" stroke="#d81010" stroke-width="3" stroke-linejoin="round"/><polyline points="795.6,566.0 803.4,566.3 816.5,580.6 826.9,605.4 835.2,611.9 843.8,601.5 859.4,612.4" fill="none" stroke="#20e0e0" stroke-width="2.2" stroke-linejoin="round"/><path d="M580 702.5H858" stroke="#fff" stroke-width="1" stroke-dasharray="3 3"/><polyline points="580.7,714.2 587.2,718.0 593.8,716.8 625.0,716.3 635.4,706.4 643.2,705.8 651.0,711.6 668.0,723.3 682.3,702.4 691.4,706.9 700.5,693.3 714.8,641.3 724.0,650.4 730.5,669.4 738.3,671.2 747.4,679.0 763.0,711.6 772.1,711.6 786.5,696.7 795.6,697.2 806.0,701.7 812.6,703.0 821.7,699.8 826.9,696.0 834.7,699.8 842.5,697.2 850.3,691.3 859.4,691.3" fill="none" stroke="#20e0e0" stroke-width="2" stroke-linejoin="round"/><polyline points="580.7,706.4 596.4,716.8 627.6,716.8 648.4,708.4 658.9,712.9 671.9,717.3 692.7,707.7 705.7,685.5 724.0,653.8 731.8,653.8 750.0,676.4 770.8,706.4 778.6,709.0 793.0,699.8 803.4,698.5 816.5,701.1 832.0,699.8 845.0,696.0 859.4,692.8" fill="none" stroke="#e020e0" stroke-width="2.2" stroke-linejoin="round"/><polyline points="580.7,772.8 604.0,781.9 630.0,792.3 656.0,797.5 669.0,803.0" fill="none" stroke="#20e0e0" stroke-width="2" stroke-linejoin="round"/><polyline points="705.0,803.0 721.4,776.7 734.4,766.3 747.4,757.1 760.4,756.4 770.8,759.7 786.5,759.7 806.0,757.9 832.0,755.8 847.7,752.7 859.4,750.6" fill="none" stroke="#20e0e0" stroke-width="2" stroke-linejoin="round"/><polyline points="580.7,772.8 588.5,772.8 617.0,783.2 645.8,792.3 661.5,796.2 671.9,803.0" fill="none" stroke="#e020e0" stroke-width="2.2" stroke-linejoin="round"/><polyline points="707.5,803.0 726.6,779.3 742.2,763.6 757.8,757.9 778.6,759.7 806.0,758.7 832.0,757.0 848.0,754.5 859.4,752.5" fill="none" stroke="#e020e0" stroke-width="2.2" stroke-linejoin="round"/><path d="M1001 469.5H1065" stroke="#fff" stroke-width="1" stroke-dasharray="3 3"/><path d="M1001 493.5H1065" stroke="#fff" stroke-width="1" stroke-dasharray="3 3"/><polyline points="1001.0,482.0 1012.0,474.0 1025.0,468.0 1040.0,460.0 1050.0,455.0" fill="none" stroke="#30d040" stroke-width="1" stroke-linejoin="round"/><polyline points="1001.0,474.0 1008.0,462.0 1015.0,453.0 1025.0,452.0" fill="none" stroke="#20e0e0" stroke-width="1" stroke-linejoin="round"/><polyline points="1001.0,466.0 1006.0,458.0 1012.0,452.0 1018.0,447.0" fill="none" stroke="#e020e0" stroke-width="2.8" stroke-linejoin="round"/><path d="M1001 558.500H1065" stroke="#c8c8c8" stroke-width="1" stroke-dasharray="9 4 3 4"/><polyline points="1001.0,556.5 1006.6,554.6 1015.7,540.3 1023.5,557.7" fill="none" stroke="#d81010" stroke-width="3" stroke-linejoin="round"/><polyline points="1023.5,558.5 1031.3,558.5" fill="none" stroke="#20e0e0" stroke-width="2.2" stroke-linejoin="round"/><polyline points="1031.3,557.7 1040.4,537.7 1048.2,529.8 1065.0,537.7" fill="none" stroke="#d81010" stroke-width="3" stroke-linejoin="round"/><path d="M1001 687.500H1065" stroke="#fff" stroke-width="1" stroke-dasharray="3 3"/><polyline points="1001.0,658.2 1015.7,640.0 1023.5,670.4 1037.8,651.1 1045.6,650.4 1053.4,659.5 1065.0,682.9" fill="none" stroke="#20e0e0" stroke-width="2" stroke-linejoin="round"/><polyline points="1001.0,664.2 1015.7,651.7 1030.0,658.2 1037.8,660.8 1050.8,654.8 1056.0,656.4 1065.0,666.0" fill="none" stroke="#e020e0" stroke-width="2.2" stroke-linejoin="round"/><polyline points="1006.6,803.0 1015.7,789.7 1030.0,781.9 1053.4,758.4 1065.0,757.1" fill="none" stroke="#20e0e0" stroke-width="2" stroke-linejoin="round"/><polyline points="1011.8,803.0 1030.0,787.0 1050.8,766.3 1065.0,759.0" fill="none" stroke="#e020e0" stroke-width="2.2" stroke-linejoin="round"/><path d="M1059 93L1064 89M1059 139L1064 134M1059 237L1064 233" stroke="#fff" stroke-width="1" fill="none"/><path d="M1059 114H1065" stroke="#20e0e0" stroke-width="3"/><path d="M1059 147H1065" stroke="#f0e020" stroke-width="3"/><path d="M1060 161H1065" stroke="#8020c0" stroke-width="2"/><path d="M1059 168H1065M1062.500 163V172" stroke="#20e0e0" stroke-width="3"/><path d="M1060 175H1065" stroke="#d01010" stroke-width="2"/><path d="M1059 194L1065 188V194Z" fill="#9030d0"/><path d="M1059 194H1065" stroke="#40a0f0" stroke-width="1.500"/><path d="M1059 215L1064 210" stroke="#f0e040" stroke-width="1.500"/><path d="M1059 229H1064" stroke="#30d030" stroke-width="3"/><path d="M1059 402.500H1065M1059 412.500H1065" stroke="#fff" stroke-width="1"/><path d="M1059 424L1065 431" stroke="#e020e0" stroke-width="2.500"/><path d="M1059 441.500H1065" stroke="#20e0e0" stroke-width="1.200"/><path d="M1059 448L1065 446" stroke="#30d040" stroke-width="1.200"/></svg>
<div class="hl" style="left:580px;top:511px;width:327px"></div>
<div class="hl" style="left:580px;top:620px;width:327px"></div>
<div class="hl" style="left:580px;top:729px;width:327px"></div>
<div class="a" style="left:580px;top:513px;width:305px;height:14px;overflow:hidden"><div class="cb" style="left:0px;top:0;color:#fff;letter-spacing:-0.25px">_3_BB_Signal</div><div class="cb" style="left:94px;top:0;color:#fff;letter-spacing:0.4px">(20)</div><div class="cb" style="left:125.5px;top:0;color:#fff;letter-spacing:0.1px">01/12</div><div class="cb" style="left:164.5px;top:0;color:#fff;letter-spacing:0.1px">13:30</div><div class="cb" style="left:204px;top:0;color:#20e0e0;letter-spacing:0px">-261.17965</div><div class="cb" style="left:277px;top:0;color:#c8c8c8;letter-spacing:0px">0.0000</div></div>
<svg class="a" style="left:887px;top:514px" width="20" height="8" viewBox="0 0 20 8"><rect x="0.500" y="0" width="8" height="8" fill="#f8f8f8"/><path d="M2 3.500H7" stroke="#111" stroke-width="1.300"/><rect x="10.500" y="0" width="8" height="8" fill="#f8f8f8"/><path d="M12.300 1.800L16.700 6.200M16.700 1.800L12.300 6.200" stroke="#111" stroke-width="1.100"/><path d="M0.500 8H8.500M10.500 8H18.500" stroke="#a0a0a0" stroke-width="0.800"/></svg>
<div class="a" style="left:580px;top:622px;width:305px;height:14px;overflow:hidden"><div class="cb" style="left:0px;top:0;color:#fff;letter-spacing:-0.05px">_FireFox_Power_UpDn</div><div class="cb" style="left:151.5px;top:0;color:#fff;letter-spacing:0.8px">(6)</div><div class="cb" style="left:176.5px;top:0;color:#fff;letter-spacing:0.1px">01/12</div><div class="cb" style="left:217px;top:0;color:#fff;letter-spacing:0.1px">13:30</div><div class="cb" style="left:254.5px;top:0;color:#20e0e0;letter-spacing:0px">0.00245</div></div>
<svg class="a" style="left:887px;top:623px" width="20" height="8" viewBox="0 0 20 8"><rect x="0.500" y="0" width="8" height="8" fill="#f8f8f8"/><path d="M2 3.500H7" stroke="#111" stroke-width="1.300"/><rect x="10.500" y="0" width="8" height="8" fill="#f8f8f8"/><path d="M12.300 1.800L16.700 6.200M16.700 1.800L12.300 6.200" stroke="#111" stroke-width="1.100"/><path d="M0.500 8H8.500M10.500 8H18.500" stroke="#a0a0a0" stroke-width="0.800"/></svg>
<div class="a" style="left:580px;top:731px;width:305px;height:14px;overflow:hidden"><div class="cb" style="left:0px;top:0;color:#fff;letter-spacing:0.13px">_FireFox_SignalSlop_UpDn(v1.01)</div><div class="cb" style="left:227px;top:0;color:#fff;letter-spacing:0.4px">(6)</div><div class="cb" style="left:251px;top:0;color:#fff;letter-spacing:0.1px">01/12</div><div class="cb" style="left:290px;top:0;color:#fff;letter-spacing:0.1px">13:30</div></div>
<svg class="a" style="left:887px;top:732px" width="20" height="8" viewBox="0 0 20 8"><rect x="0.500" y="0" width="8" height="8" fill="#f8f8f8"/><path d="M2 3.500H7" stroke="#111" stroke-width="1.300"/><rect x="10.500" y="0" width="8" height="8" fill="#f8f8f8"/><path d="M12.300 1.800L16.700 6.200M16.700 1.800L12.300 6.200" stroke="#111" stroke-width="1.100"/><path d="M0.500 8H8.500M10.500 8H18.500" stroke="#a0a0a0" stroke-width="0.800"/></svg>
<div class="tick" style="left:908px;top:462px"></div>
<div class="tick" style="left:908px;top:479px"></div>
<div class="tick" style="left:908px;top:495px"></div>
<div class="tick" style="left:908px;top:529px"></div>
<div class="tick" style="left:908px;top:548px"></div>
<div class="tick" style="left:908px;top:565px"></div>
<div class="tick" style="left:908px;top:584px"></div>
<div class="tick" style="left:908px;top:601px"></div>
<div class="tick" style="left:908px;top:640px"></div>
<div class="tick" style="left:908px;top:658px"></div>
<div class="tick" style="left:908px;top:680px"></div>
<div class="tick" style="left:908px;top:701px"></div>
<div class="tick" style="left:908px;top:723px"></div>
<div class="tick" style="left:908px;top:737px"></div>
<div class="tick" style="left:908px;top:762px"></div>
<div class="tick" style="left:908px;top:787px"></div>
<div class="cb" style="left:917px;top:444px">5.00000</div>
<div class="cb" style="left:917px;top:473px">0.00000</div>
<div class="cb" style="left:936px;top:500px;letter-spacing:-0.3px">00000</div>
<div class="a" style="left:907px;top:500px;width:26px;height:13px;box-sizing:border-box;border:1px solid #fff;background:#3c3c3c"></div><div class="cb" style="left:911px;top:500px">x10</div>
<div class="cb" style="left:917px;top:523px">2.00000</div>
<div class="lab" style="left:914px;top:559px;width:47px;background:#c0c0c0;color:#fff">0.00000</div>
<div class="cb" style="left:917px;top:595px">-2.00000</div>
<div class="a" style="left:907px;top:609px;width:33px;height:13px;box-sizing:border-box;border:1px solid #fff;background:#3c3c3c"></div><div class="cb" style="left:911px;top:609px">x100</div>
<div class="cb" style="left:917px;top:652px">0.01000</div>
<div class="cb" style="left:917px;top:694px">0.00000</div>
<div class="cb" style="left:917px;top:730px">1.06500</div>
<div class="cb" style="left:917px;top:755px">1.06000</div>
<div class="cb" style="left:917px;top:780px">1.05500</div>
<div class="vtb" style="left:974px;top:14px;width:23px;height:788px"></div><svg class="ic" style="left:979px;top:18px" viewBox="0 0 18 18"><rect x="0.5" y="0.5" width="17" height="17" fill="#d6d3ce" stroke="#7c7c7c"/><path d="M1.5 16.5V1.5H16.5" fill="none" stroke="#fff"/><path d="M17 1V17H1Z" fill="#a8a8a8"/><path d="M11.200 3.200C8.500 2.600 6 3.800 5.300 6.500" fill="none" stroke="#0000a8" stroke-width="2.200"/><path d="M3.200 10L2.600 4.800L8.300 7.600Z" fill="#0000a8"/><path d="M6.800 14.800C9.500 15.400 12 14.200 12.700 11.500" fill="none" stroke="#0000a8" stroke-width="2.200"/><path d="M14.800 8L15.400 13.200L9.700 10.400Z" fill="#0000a8"/></svg><svg class="ic" style="left:979px;top:43px" viewBox="0 0 18 18"><rect x="0.5" y="0.5" width="17" height="17" fill="#d6d3ce" stroke="#7c7c7c"/><path d="M1.5 16.5V1.5H16.5" fill="none" stroke="#fff"/><rect x="2" y="2" width="14" height="14" fill="#e6d8f2"/><rect x="7" y="3" width="4" height="12" fill="#f4b8c8"/><rect x="2.600" y="2.600" width="4.300" height="12.800" rx="1" fill="#fff" stroke="#28289c" stroke-width="1.200"/><rect x="11.100" y="2.600" width="4.300" height="12.800" rx="1" fill="#fff" stroke="#28289c" stroke-width="1.200"/><path d="M4 5.500H5.500M4 8V10.500M5.500 8V10.500M4 13H5.500M12.500 5.500H14M12.500 8V10.500M14 8V10.500M12.500 13H14" stroke="#28289c" stroke-width="0.900" fill="none"/><path d="M7.500 6H10.500M7.500 12.500H10.500" stroke="#e01818" stroke-width="1.600"/><path d="M8.200 8.200H9.800V10.200H8.200Z" fill="#e01818"/></svg><svg class="a" style="left:976px;top:66px" width="24" height="23" viewBox="0 0 24 23"><rect x="0" y="0" width="24" height="23" fill="url(#dz)"/><path d="M0.500 22.500V0.500H23.500" fill="none" stroke="#808080"/><path d="M23.500 0.500V22.500H0.500" fill="none" stroke="#fff"/><rect x="4.500" y="3.500" width="17" height="17" fill="url(#dz)" stroke="#7c7c7c"/><g transform="translate(4,3)"><path d="M4.500 1.500V14L7.500 11.200L9.800 16L12 15L9.800 10.400H13.500Z" fill="#00008c"/></g></svg><svg class="ic" style="left:979px;top:93px" viewBox="0 0 18 18"><rect x="0.500" y="0.500" width="17" height="17" fill="#b4b4b4" stroke="#8c8c8c"/><path d="M2.500 1.500V15.500H16.500" fill="none" stroke="#f4f4f4"/><g transform="translate(1,1)" fill="none" stroke="#fff" stroke-width="1.2"><path d="M3 14L14 3M3.5 3.5H7.5M3.5 3.5V7H7.5M10.5 14V10H14V12.5H10.5"/><rect x="2.5" y="12.5" width="2" height="2"/><rect x="12.5" y="2.5" width="2" height="2"/></g><g fill="none" stroke="#808080" stroke-width="1.2"><path d="M3 14L14 3M3.5 3.5H7.5M3.5 3.5V7H7.5M10.5 14V10H14V12.5H10.5"/><rect x="2.5" y="12.5" width="2" height="2"/><rect x="12.5" y="2.5" width="2" height="2"/></g></svg><svg class="ic" style="left:979px;top:118px" viewBox="0 0 18 18"><rect x="0.500" y="0.500" width="17" height="17" fill="#b4b4b4" stroke="#8c8c8c"/><path d="M2.500 1.500V15.500H16.500" fill="none" stroke="#f4f4f4"/><g transform="translate(1,1)" fill="none" stroke="#fff" stroke-width="1.2"><path d="M2.5 4L5 7L9 2.5M4.5 12L8.5 7.5H13.5L10 12ZM4.5 12V15H10V12M10 15L13.5 10.5V7.5"/></g><g fill="none" stroke="#808080" stroke-width="1.2"><path d="M2.5 4L5 7L9 2.5M4.5 12L8.5 7.5H13.5L10 12ZM4.5 12V15H10V12M10 15L13.5 10.5V7.5"/></g></svg><svg class="ic" style="left:979px;top:143px" viewBox="0 0 18 18"><rect x="0.500" y="0.500" width="17" height="17" fill="#b4b4b4" stroke="#8c8c8c"/><path d="M2.500 1.500V15.500H16.500" fill="none" stroke="#f4f4f4"/><g transform="translate(1,1)" fill="none" stroke="#fff" stroke-width="1.2"><path d="M3 3V9M5.5 3V7M8 3V7M10.5 3V7M3 5H11M4.5 12L8.5 7.5H13.5L10 12ZM4.5 12V15H10V12M10 15L13.5 10.5V7.5"/></g><g fill="none" stroke="#808080" stroke-width="1.2"><path d="M3 3V9M5.5 3V7M8 3V7M10.5 3V7M3 5H11M4.5 12L8.5 7.5H13.5L10 12ZM4.5 12V15H10V12M10 15L13.5 10.5V7.5"/></g></svg><svg class="ic" style="left:979px;top:168px" viewBox="0 0 18 18"><rect x="0.5" y="0.5" width="17" height="17" fill="#d6d3ce" stroke="#7c7c7c"/><path d="M1.5 16.5V1.5H16.5" fill="none" stroke="#fff"/><rect x="2" y="2" width="14" height="14" fill="#e0daf0"/><path d="M2.500 2.500V15.500H15.500" fill="none" stroke="#1818b0"/><path d="M8.5 3V13" stroke="#d81818" stroke-width="1.4"/><path d="M4.5 7L7 4.5L8 6M9.500 13L15 7.500" fill="none" stroke="#000" stroke-width="1.2"/></svg><svg class="ic" style="left:979px;top:193px" viewBox="0 0 18 18"><rect x="0.5" y="0.5" width="17" height="17" fill="#d6d3ce" stroke="#7c7c7c"/><path d="M1.5 16.5V1.5H16.5" fill="none" stroke="#fff"/><path d="M4 9.500H14" stroke="#1818b0" stroke-width="1"/><rect x="3" y="8" width="3" height="3" fill="#d81818"/><rect x="12" y="8" width="3" height="3" fill="#d81818"/></svg><svg class="ic" style="left:979px;top:218px" viewBox="0 0 18 18"><rect x="0.5" y="0.5" width="17" height="17" fill="#d6d3ce" stroke="#7c7c7c"/><path d="M1.5 16.5V1.5H16.5" fill="none" stroke="#fff"/><path d="M8.5 4V14" stroke="#1818b0" stroke-width="1.2"/><rect x="7" y="3" width="3" height="3" fill="#d81818"/><rect x="7" y="12" width="3" height="3" fill="#d81818"/></svg><svg class="ic" style="left:979px;top:243px" viewBox="0 0 18 18"><rect x="0.5" y="0.5" width="17" height="17" fill="#d6d3ce" stroke="#7c7c7c"/><path d="M1.5 16.5V1.5H16.5" fill="none" stroke="#fff"/><path d="M4.500 12V15.500H12.500V10" fill="none" stroke="#1818b0" stroke-width="1.2"/><path d="M5.500 5V12" stroke="#1818b0"/><rect x="4" y="7" width="3" height="5" fill="#1818b0"/><path d="M12.500 2V10" stroke="#d81818"/><rect x="11" y="3" width="3" height="3.500" fill="#d81818"/></svg><svg class="ic" style="left:979px;top:268px" viewBox="0 0 18 18"><rect x="0.5" y="0.5" width="17" height="17" fill="#d6d3ce" stroke="#7c7c7c"/><path d="M1.5 16.5V1.5H16.5" fill="none" stroke="#fff"/><path d="M4.5 13.500L13.500 4.500" stroke="#1818b0" stroke-width="1.2"/><rect x="3" y="12" width="3" height="3" fill="#d81818"/><rect x="12" y="3" width="3" height="3" fill="#d81818"/></svg><svg class="ic" style="left:979px;top:293px" viewBox="0 0 18 18"><rect x="0.5" y="0.5" width="17" height="17" fill="#d6d3ce" stroke="#7c7c7c"/><path d="M1.5 16.5V1.5H16.5" fill="none" stroke="#fff"/><path d="M3 15L15 3" stroke="#1818b0" stroke-width="1.2"/><text x="2.500" y="9" font-size="8" font-family="Liberation Sans,sans-serif" font-weight="bold" fill="#d81818">A</text><text x="10" y="15.500" font-size="8" font-family="Liberation Sans,sans-serif" font-weight="bold" fill="#d81818">T</text></svg><svg class="ic" style="left:979px;top:318px" viewBox="0 0 18 18"><rect x="0.5" y="0.5" width="17" height="17" fill="#d6d3ce" stroke="#7c7c7c"/><path d="M1.5 16.5V1.5H16.5" fill="none" stroke="#fff"/><rect x="2" y="2" width="14" height="14" fill="#e4e0f4"/><path d="M3 3.500H15M5 5.500H15M7 7.500H15" stroke="#d81818" stroke-width="1.1"/><path d="M7 10.500H15M5 12.500H15M3 14.500H15" stroke="#1818b0" stroke-width="1.1"/></svg><svg class="ic" style="left:979px;top:343px" viewBox="0 0 18 18"><rect x="0.5" y="0.5" width="17" height="17" fill="#d6d3ce" stroke="#7c7c7c"/><path d="M1.5 16.5V1.5H16.5" fill="none" stroke="#fff"/><rect x="2" y="2" width="14" height="14" fill="#e4e0f4"/><text x="2.500" y="10" font-size="10" textLength="12" lengthAdjust="spacingAndGlyphs" font-family="Liberation Sans,sans-serif" font-weight="bold" fill="#d81818">f/L</text><path d="M4.500 11.500V16M7.500 11.500V16M10.500 11.500V16M13.500 11.500V16" stroke="#1818b0" stroke-width="1.300"/></svg><svg class="ic" style="left:979px;top:368px" viewBox="0 0 18 18"><rect x="0.5" y="0.5" width="17" height="17" fill="#d6d3ce" stroke="#7c7c7c"/><path d="M1.5 16.5V1.5H16.5" fill="none" stroke="#fff"/><rect x="2" y="2" width="14" height="14" fill="#e4e0f4"/><text x="3" y="10" font-size="10" textLength="11" lengthAdjust="spacingAndGlyphs" font-family="Liberation Sans,sans-serif" font-weight="bold" fill="#d81818">f/f</text><path d="M3 13H6.500M5 15.500C8 15.500 9 11.500 12 11.500S15 14 12.500 14.500C10 15 9 13 11 12.500" fill="none" stroke="#1818b0" stroke-width="1.1"/></svg><svg class="ic" style="left:979px;top:393px" viewBox="0 0 18 18"><rect x="0.5" y="0.5" width="17" height="17" fill="#d6d3ce" stroke="#7c7c7c"/><path d="M1.5 16.5V1.5H16.5" fill="none" stroke="#fff"/><rect x="2" y="2" width="14" height="14" fill="#e4e0f4"/><text x="3" y="8" font-size="8" font-family="Liberation Sans,sans-serif" font-weight="bold" fill="#d81818">f</text><circle cx="13" cy="6" r="1.8" fill="none" stroke="#d81818" stroke-width="1.1"/><path d="M11 2.500L8 9" stroke="#d81818" stroke-width="1.2"/><path d="M2.500 14.500C5 11 7 10 9 8.500M4.500 15.500C6 12 8 10.500 9.500 9M9 8.500C11 10 13 11.500 15.500 14.500M9.500 10C11 11.500 12 13 13.500 15.500" fill="none" stroke="#101090" stroke-width="1.3"/></svg><svg class="ic" style="left:979px;top:418px" viewBox="0 0 18 18"><rect x="0.5" y="0.5" width="17" height="17" fill="#d6d3ce" stroke="#7c7c7c"/><path d="M1.5 16.5V1.5H16.5" fill="none" stroke="#fff"/><rect x="2" y="2" width="14" height="14" fill="#e4e0f4"/><text x="2.500" y="10" font-size="10" textLength="13" lengthAdjust="spacingAndGlyphs" font-family="Liberation Sans,sans-serif" font-weight="bold" fill="#d81818">f/R</text><path d="M3 10.500H15M3 14.500H15" stroke="#1818b0" stroke-width="1.2"/><path d="M3 12.500H15" stroke="#1818b0" stroke-width="1.2" stroke-dasharray="3 1"/></svg><svg class="ic" style="left:979px;top:443px" viewBox="0 0 18 18"><rect x="0.5" y="0.5" width="17" height="17" fill="#d6d3ce" stroke="#7c7c7c"/><path d="M1.5 16.5V1.5H16.5" fill="none" stroke="#fff"/><path d="M3 9.500L10 2.500M3 15.500L15 3.500M4 9L10 15L15 9.500" fill="none" stroke="#1818b0" stroke-width="1"/></svg><svg class="ic" style="left:979px;top:468px" viewBox="0 0 18 18"><rect x="0.5" y="0.5" width="17" height="17" fill="#d6d3ce" stroke="#7c7c7c"/><path d="M1.5 16.5V1.5H16.5" fill="none" stroke="#fff"/><path d="M3 14L8.500 8.500L11.500 11.500L16 7" fill="none" stroke="#1818b0" stroke-width="1.2"/><text x="2.500" y="8" font-size="7.500" font-family="Liberation Sans,sans-serif" font-weight="bold" fill="#d81818">E</text><path d="M7 9.500L8.500 7L10 9.500Z" fill="#d81818"/><circle cx="3.500" cy="14" r="1.300" fill="#d81818"/><path d="M5.500 12L6.500 11" stroke="#d81818"/></svg><svg class="ic" style="left:979px;top:493px" viewBox="0 0 18 18"><rect x="0.5" y="0.5" width="17" height="17" fill="#d6d3ce" stroke="#7c7c7c"/><path d="M1.5 16.5V1.5H16.5" fill="none" stroke="#fff"/><path d="M3 14L8.500 8.500L11.500 11.500L16 7" fill="none" stroke="#1818b0" stroke-width="1.2"/><text x="2.500" y="8" font-size="7.500" font-family="Liberation Sans,sans-serif" font-weight="bold" fill="#d81818">E</text><path d="M7 9.500L8.500 7L10 9.500Z" fill="#d81818"/><circle cx="3.500" cy="14" r="1.300" fill="#d81818"/><path d="M5.500 12L6.500 11" stroke="#d81818"/><path d="M10.200 10.500H13L11.500 13Z" fill="#d81818"/></svg><svg class="ic" style="left:979px;top:518px" viewBox="0 0 18 18"><rect x="0.5" y="0.5" width="17" height="17" fill="#d6d3ce" stroke="#7c7c7c"/><path d="M1.5 16.5V1.5H16.5" fill="none" stroke="#fff"/><text x="2.500" y="8.500" font-size="8" font-family="Liberation Sans,sans-serif" font-weight="bold" fill="#d81818">L</text><path d="M6.500 10.500V16M9.500 8V14M12.500 5V12M14.500 3V10" fill="none" stroke="#a01858" stroke-width="1.300"/><path d="M3.500 16L15 5.500" fill="none" stroke="#1818b0" stroke-width="1"/></svg><svg class="ic" style="left:979px;top:543px" viewBox="0 0 18 18"><rect x="0.5" y="0.5" width="17" height="17" fill="#d6d3ce" stroke="#7c7c7c"/><path d="M1.5 16.5V1.5H16.5" fill="none" stroke="#fff"/><path d="M7.500 7.500V15M10.500 5V13.500M13.500 3V11M15.500 3V8" fill="none" stroke="#a01858" stroke-width="1.300"/><path d="M2.500 14L14.500 2.500M6 15.500L16 6.500" fill="none" stroke="#1818b0" stroke-width="1"/><text x="2" y="8" font-size="7.500" font-family="Liberation Sans,sans-serif" font-weight="bold" fill="#d81818">D</text></svg><svg class="ic" style="left:979px;top:568px" viewBox="0 0 18 18"><rect x="0.5" y="0.5" width="17" height="17" fill="#d6d3ce" stroke="#7c7c7c"/><path d="M1.5 16.5V1.5H16.5" fill="none" stroke="#fff"/><path d="M7.500 7.500V15M10.500 5V13.500M13.500 3V11M15.500 3V8" fill="none" stroke="#a01858" stroke-width="1.300"/><path d="M2.500 14L14.500 2.500M6 15.500L16 6.500" fill="none" stroke="#1818b0" stroke-width="1"/><text x="2" y="8" font-size="7.500" font-family="Liberation Sans,sans-serif" font-weight="bold" fill="#d81818">E</text></svg><svg class="ic" style="left:979px;top:593px" viewBox="0 0 18 18"><rect x="0.5" y="0.5" width="17" height="17" fill="#d6d3ce" stroke="#7c7c7c"/><path d="M1.5 16.5V1.5H16.5" fill="none" stroke="#fff"/><path d="M7.500 7.500V15M10.500 5V13.500M13.500 3V11M15.500 3V8" fill="none" stroke="#a01858" stroke-width="1.300"/><path d="M2.500 14L14.500 2.500M6 15.500L16 6.500" fill="none" stroke="#1818b0" stroke-width="1"/><text x="2" y="8" font-size="7.500" font-family="Liberation Sans,sans-serif" font-weight="bold" fill="#d81818">R</text></svg><svg class="ic" style="left:979px;top:618px" viewBox="0 0 18 18"><rect x="0.5" y="0.5" width="17" height="17" fill="#d6d3ce" stroke="#7c7c7c"/><path d="M1.5 16.5V1.5H16.5" fill="none" stroke="#fff"/><rect x="2" y="2" width="14" height="14" fill="#e4e0f4"/><path d="M3 3.500H15M3 14.500H15M9.500 7.500H15" stroke="#1818b0" stroke-width="1.2"/><path d="M9.500 10.500H15" stroke="#1818b0" stroke-width="1.2" stroke-dasharray="2 1"/><text x="2.500" y="12" font-size="8.500" font-family="Liberation Sans,sans-serif" font-weight="bold" fill="#d81818">Q</text></svg><svg class="ic" style="left:979px;top:643px" viewBox="0 0 18 18"><rect x="0.5" y="0.5" width="17" height="17" fill="#d6d3ce" stroke="#7c7c7c"/><path d="M1.5 16.5V1.5H16.5" fill="none" stroke="#fff"/><text x="9" y="15" font-size="17" font-family="Liberation Serif,serif" font-weight="bold" fill="#2828c8" text-anchor="middle">T</text></svg><svg class="ic" style="left:979px;top:668px" viewBox="0 0 18 18"><rect x="0.5" y="0.5" width="17" height="17" fill="#d6d3ce" stroke="#7c7c7c"/><path d="M1.5 16.5V1.5H16.5" fill="none" stroke="#fff"/><path d="M9 3L15 9.500H11.500V15H6.500V9.500H3Z" fill="#2828d0"/></svg><svg class="ic" style="left:979px;top:693px" viewBox="0 0 18 18"><rect x="0.5" y="0.5" width="17" height="17" fill="#d6d3ce" stroke="#7c7c7c"/><path d="M1.5 16.5V1.5H16.5" fill="none" stroke="#fff"/><path d="M9 15L15 8.500H11.500V3H6.500V8.500H3Z" fill="#2828d0"/></svg><svg class="ic" style="left:979px;top:718px" viewBox="0 0 18 18"><rect x="0.5" y="0.5" width="17" height="17" fill="#d6d3ce" stroke="#7c7c7c"/><path d="M1.5 16.5V1.5H16.5" fill="none" stroke="#fff"/><rect x="2" y="2" width="14" height="14" fill="#e4e0f4"/><rect x="3.500" y="3.500" width="11" height="11" fill="#f05858" stroke="#2020a0" stroke-width="1"/><rect x="4.500" y="4.500" width="9" height="9" fill="none" stroke="#f4d0e0" stroke-width="1"/></svg><svg class="ic" style="left:979px;top:743px" viewBox="0 0 18 18"><rect x="0.5" y="0.5" width="17" height="17" fill="#d6d3ce" stroke="#7c7c7c"/><path d="M1.5 16.5V1.5H16.5" fill="none" stroke="#fff"/><circle cx="9" cy="9" r="5.800" fill="#f4d0e0" stroke="#2020a0" stroke-width="1"/><circle cx="9" cy="9" r="4.300" fill="#f05858"/></svg><svg class="ic" style="left:979px;top:768px" viewBox="0 0 18 18"><rect x="0.5" y="0.5" width="17" height="17" fill="#d6d3ce" stroke="#7c7c7c"/><path d="M1.5 16.5V1.5H16.5" fill="none" stroke="#fff"/><circle cx="9" cy="9" r="5.800" fill="#fff" stroke="#2020a0" stroke-width="1"/><path d="M5.500 9L9 12.500L12.500 9" fill="none" stroke="#2020a0" stroke-width="1.1"/><rect x="6.500" y="6.500" width="1.200" height="1.200" fill="#2020a0"/><rect x="10.300" y="6.500" width="1.200" height="1.200" fill="#2020a0"/></svg><svg class="ic" style="left:979px;top:793px" viewBox="0 0 18 18"><rect x="0.5" y="0.5" width="17" height="17" fill="#d6d3ce" stroke="#7c7c7c"/><path d="M1.5 16.5V1.5H16.5" fill="none" stroke="#fff"/><circle cx="9" cy="9" r="5.800" fill="#fff" stroke="#2020a0" stroke-width="1"/><path d="M9 5V9H12" fill="none" stroke="#000" stroke-width="1.2"/></svg>
<div class="wb" style="left:959px;top:0px"><div class="a" style="left:2px;top:7px;width:5px;height:2px;background:#000"></div></div><div class="wb" style="left:973px;top:0px"><div class="a" style="left:2px;top:1px;width:6px;height:7px;box-sizing:border-box;border:1px solid #000;border-top-width:2px"></div></div><div class="wb" style="left:987px;top:0px"><svg class="a" style="left:1px;top:1px" width="8" height="8"><path d="M1.5 1.5L6.5 6.5M6.5 1.5L1.5 6.5" stroke="#000" stroke-width="1.6"/></svg></div>
<div class="a" style="left:997px;top:0;width:2px;height:802px;background:#484848"></div>
<div class="a" style="left:999px;top:0;width:1.500px;height:802px;background:#f4f4f4"></div>
<div class="a" style="left:1001px;top:0;width:64px;height:9px;background:#f6f6f6"></div>
<div class="a" style="left:1001px;top:9px;width:64px;height:1.500px;background:#303030"></div>
<div class="a" style="left:1001px;top:10.500px;width:64px;height:1.500px;background:#d8d8d8"></div>
<div class="t" style="left:1006px;top:-5px;font-size:12px;line-height:13px">[3010] Euro FX-201703</div>
<div class="a" style="left:1001px;top:12px;width:64px;height:21px;background:#b9bbbe"></div>
<div class="tb" style="left:1002px;top:13px;width:6px;height:18px"><span class="a" style="left:0px;top:5px;width:0;height:0;border:3px solid transparent;border-right:4px solid #404040;border-left:0"></span></div>
<div class="a" style="left:1012px;top:13px;width:1px;height:19px;background:#8c8c90"></div>
<div class="inp" style="left:1017px;top:13px;width:60px;height:18px;padding-left:3px">6EH17</div>
<div class="a" style="left:1001px;top:33px;width:64px;height:1px;background:#303030"></div>
<div class="cb" style="left:1001px;top:36px;word-spacing:2.600px;letter-spacing:0.200px">Euro FX-201703</div>
<div class="hl" style="left:1001px;top:509px;width:64px"></div>
<div class="cb" style="left:1001px;top:512px;letter-spacing:-0.250px">_3_BB_Signal</div>
<div class="hl" style="left:1001px;top:619px;width:64px"></div>
<div class="cb" style="left:1001px;top:621px">_FireFox_Power</div>
<div class="hl" style="left:1001px;top:729px;width:64px"></div>
<div class="cb" style="left:1001px;top:731px">_FireFox_Signal</div>
<div class="a" style="left:527px;top:90px;width:532px;height:362px;background:#d4d0c8;box-sizing:border-box;border:1px solid;border-color:#d4d0c8 #404040 #404040 #d4d0c8;box-shadow:inset 1px 1px 0 #fff,inset -1px -1px 0 #808080">
<div class="a" style="left:2px;top:2px;width:526px;height:18px;background:linear-gradient(90deg,#0a246a 0%,#0a246a 8%,#a6caf0 100%)"></div>
<div class="t" style="left:10px;top:4px;color:#fff;font-weight:bold;font-size:12px;line-height:14px"><span class="k">열기</span></div>
<div class="btn" style="left:511px;top:4px;width:16px;height:14px"><svg class="a" style="left:3px;top:2px" width="8" height="8"><path d="M0.500 0.500L7.500 7.500M7.500 0.500L0.500 7.500" stroke="#000" stroke-width="1.600"/></svg></div>
<div class="t" style="left:12px;top:31px;line-height:14px"><span class="k">종류</span> <span class="k">선택</span></div>
<div class="a" style="left:70px;top:27px;width:192px;height:20px;background:#fff;box-sizing:border-box;border:1px solid;border-color:#808080 #fff #fff #808080;box-shadow:inset 1px 1px 0 #404040,inset -1px -1px 0 #d4d0c8"></div>
<div class="a" style="left:73px;top:30px;width:171px;height:14px;background:#0a246a;color:#fff;line-height:14px;padding-left:2px;box-sizing:border-box"><span class="k">시스템</span></div>
<div class="btn" style="left:244px;top:29px;width:16px;height:16px"><span class="a" style="left:3px;top:5px;width:0;height:0;border:4px solid transparent;border-top:4px solid #000;border-bottom:0"></span></div>
<div class="a" style="left:11px;top:53px;width:511px;height:227px;background:#fff;box-sizing:border-box;border:1px solid;border-color:#808080 #fff #fff #808080;box-shadow:inset 1px 1px 0 #404040,inset -1px -1px 0 #d4d0c8;overflow:hidden">
<div class="a" style="left:1px;top:1px;width:182px;height:15px;background:#d4d0c8;box-sizing:border-box;border:1px solid;border-color:#fff #404040 #404040 #fff;box-shadow:inset -1px -1px 0 #808080;line-height:15px;padding-left:5px;white-space:nowrap"><span class="k">이름</span></div>
<div class="a" style="left:183px;top:1px;width:80px;height:15px;background:#d4d0c8;box-sizing:border-box;border:1px solid;border-color:#fff #404040 #404040 #fff;box-shadow:inset -1px -1px 0 #808080;line-height:15px;padding-left:7px;white-space:nowrap"><span class="k">종류</span></div>
<div class="a" style="left:263px;top:1px;width:40px;height:15px;background:#d4d0c8;box-sizing:border-box;border:1px solid;border-color:#fff #404040 #404040 #fff;box-shadow:inset -1px -1px 0 #808080;line-height:15px;padding-left:6px;white-space:nowrap"><span class="k">상태</span></div>
<div class="a" style="left:303px;top:1px;width:39px;height:15px;background:#d4d0c8;box-sizing:border-box;border:1px solid;border-color:#fff #404040 #404040 #fff;box-shadow:inset -1px -1px 0 #808080;line-height:15px;padding-left:5px;white-space:nowrap"><span class="k">검증</span></div>
<div class="a" style="left:342px;top:1px;width:39px;height:15px;background:#d4d0c8;box-sizing:border-box;border:1px solid;border-color:#fff #404040 #404040 #fff;box-shadow:inset -1px -1px 0 #808080;line-height:15px;padding-left:6px;white-space:nowrap"><span class="k">편집</span></div>
<div class="a" style="left:381px;top:1px;width:110px;height:15px;background:#d4d0c8;box-sizing:border-box;border:1px solid;border-color:#fff #404040 #404040 #fff;box-shadow:inset -1px -1px 0 #808080;line-height:15px;padding-left:7px;white-space:nowrap"><span class="k">최종</span> <span class="k">수정일</span></div>
<svg class="a" style="left:3px;top:20px" width="16" height="15" viewBox="0 0 16 15"><path d="M3.600 0.800L7.100 5.200H5.100V10.600H2.200V5.200H0.100Z" fill="#d42414"/><path d="M10.700 12.900L14.300 8.500H12.200V3.200H9.300V8.500H7.200Z" fill="#1c5cc8"/></svg>
<div class="t" style="left:21px;top:18px;line-height:16px">_FireFox_ZigZag(EA)</div>
<div class="t" style="left:191px;top:18px;line-height:16px"><span class="k">시스템</span></div>
<div class="t" style="left:309px;top:18px;line-height:16px">O</div>
<div class="t" style="left:349px;top:18px;line-height:16px">O</div>
<div class="t" style="left:389px;top:18px;line-height:16px">2017/01/12</div>
<div class="t" style="left:456px;top:18px;line-height:16px">12:51</div>
<svg class="a" style="left:3px;top:37px" width="16" height="15" viewBox="0 0 16 15"><path d="M3.600 0.800L7.100 5.200H5.100V10.600H2.200V5.200H0.100Z" fill="#d42414"/><path d="M10.700 12.900L14.300 8.500H12.200V3.200H9.300V8.500H7.200Z" fill="#1c5cc8"/></svg>
<div class="t" style="left:21px;top:35px;line-height:16px">_FireFox_ZigZag(S)</div>
<div class="t" style="left:191px;top:35px;line-height:16px"><span class="k">시스템</span></div>
<div class="t" style="left:309px;top:35px;line-height:16px">O</div>
<div class="t" style="left:349px;top:35px;line-height:16px">O</div>
<div class="t" style="left:389px;top:35px;line-height:16px">2017/01/12</div>
<div class="t" style="left:456px;top:35px;line-height:16px">13:06</div>
<svg class="a" style="left:3px;top:54px" width="16" height="15" viewBox="0 0 16 15"><path d="M3.600 0.800L7.100 5.200H5.100V10.600H2.200V5.200H0.100Z" fill="#d42414"/><path d="M10.700 12.900L14.300 8.500H12.200V3.200H9.300V8.500H7.200Z" fill="#1c5cc8"/></svg>
<div class="t" style="left:21px;top:52px;line-height:16px">_FireFox_ZigZag(S1.0)</div>
<div class="t" style="left:191px;top:52px;line-height:16px"><span class="k">시스템</span></div>
<div class="t" style="left:309px;top:52px;line-height:16px">O</div>
<div class="t" style="left:349px;top:52px;line-height:16px">O</div>
<div class="t" style="left:389px;top:52px;line-height:16px">2017/01/12</div>
<div class="t" style="left:456px;top:52px;line-height:16px">12:51</div>
<svg class="a" style="left:3px;top:71px" width="16" height="15" viewBox="0 0 16 15"><path d="M3.600 0.800L7.100 5.200H5.100V10.600H2.200V5.200H0.100Z" fill="#d42414"/><path d="M10.700 12.900L14.300 8.500H12.200V3.200H9.300V8.500H7.200Z" fill="#1c5cc8"/></svg>
<div class="t" style="left:21px;top:69px;line-height:16px">AB Ratio</div>
<div class="t" style="left:191px;top:69px;line-height:16px"><span class="k">시스템</span></div>
<div class="t" style="left:309px;top:69px;line-height:16px">O</div>
<div class="t" style="left:349px;top:69px;line-height:16px">O</div>
<div class="t" style="left:389px;top:69px;line-height:16px">2014/11/04</div>
<div class="t" style="left:456px;top:69px;line-height:16px">09:40</div>
<svg class="a" style="left:3px;top:88px" width="16" height="15" viewBox="0 0 16 15"><path d="M3.600 0.800L7.100 5.200H5.100V10.600H2.200V5.200H0.100Z" fill="#d42414"/><path d="M10.700 12.900L14.300 8.500H12.200V3.200H9.300V8.500H7.200Z" fill="#1c5cc8"/></svg>
<div class="t" style="left:21px;top:86px;line-height:16px">Aroon</div>
<div class="t" style="left:191px;top:86px;line-height:16px"><span class="k">시스템</span></div>
<div class="t" style="left:309px;top:86px;line-height:16px">O</div>
<div class="t" style="left:349px;top:86px;line-height:16px">O</div>
<div class="t" style="left:389px;top:86px;line-height:16px">2014/11/04</div>
<div class="t" style="left:456px;top:86px;line-height:16px">09:40</div>
<svg class="a" style="left:3px;top:105px" width="16" height="15" viewBox="0 0 16 15"><path d="M3.600 0.800L7.100 5.200H5.100V10.600H2.200V5.200H0.100Z" fill="#d42414"/><path d="M10.700 12.900L14.300 8.500H12.200V3.200H9.300V8.500H7.200Z" fill="#1c5cc8"/></svg>
<div class="t" style="left:21px;top:103px;line-height:16px">BinaryWave</div>
<div class="t" style="left:191px;top:103px;line-height:16px"><span class="k">시스템</span></div>
<div class="t" style="left:309px;top:103px;line-height:16px">O</div>
<div class="t" style="left:349px;top:103px;line-height:16px">O</div>
<div class="t" style="left:389px;top:103px;line-height:16px">2014/11/04</div>
<div class="t" style="left:456px;top:103px;line-height:16px">09:40</div>
<svg class="a" style="left:3px;top:122px" width="16" height="15" viewBox="0 0 16 15"><path d="M3.600 0.800L7.100 5.200H5.100V10.600H2.200V5.200H0.100Z" fill="#d42414"/><path d="M10.700 12.900L14.300 8.500H12.200V3.200H9.300V8.500H7.200Z" fill="#1c5cc8"/></svg>
<div class="t" style="left:21px;top:120px;line-height:16px">BinaryWave MACD</div>
<div class="t" style="left:191px;top:120px;line-height:16px"><span class="k">시스템</span></div>
<div class="t" style="left:309px;top:120px;line-height:16px">O</div>
<div class="t" style="left:349px;top:120px;line-height:16px">O</div>
<div class="t" style="left:389px;top:120px;line-height:16px">2014/11/04</div>
<div class="t" style="left:456px;top:120px;line-height:16px">09:40</div>
<svg class="a" style="left:3px;top:139px" width="16" height="15" viewBox="0 0 16 15"><path d="M3.600 0.800L7.100 5.200H5.100V10.600H2.200V5.200H0.100Z" fill="#d42414"/><path d="M10.700 12.900L14.300 8.500H12.200V3.200H9.300V8.500H7.200Z" fill="#1c5cc8"/></svg>
<div class="t" style="left:21px;top:137px;line-height:16px">Boll Bands Bearish</div>
<div class="t" style="left:191px;top:137px;line-height:16px"><span class="k">시스템</span></div>
<div class="t" style="left:309px;top:137px;line-height:16px">O</div>
<div class="t" style="left:349px;top:137px;line-height:16px">O</div>
<div class="t" style="left:389px;top:137px;line-height:16px">2014/11/04</div>
<div class="t" style="left:456px;top:137px;line-height:16px">09:40</div>
<svg class="a" style="left:3px;top:156px" width="16" height="15" viewBox="0 0 16 15"><path d="M3.600 0.800L7.100 5.200H5.100V10.600H2.200V5.200H0.100Z" fill="#d42414"/><path d="M10.700 12.900L14.300 8.500H12.200V3.200H9.300V8.500H7.200Z" fill="#1c5cc8"/></svg>
<div class="t" style="left:21px;top:154px;line-height:16px">Boll Bands Bullish</div>
<div class="t" style="left:191px;top:154px;line-height:16px"><span class="k">시스템</span></div>
<div class="t" style="left:309px;top:154px;line-height:16px">O</div>
<div class="t" style="left:349px;top:154px;line-height:16px">O</div>
<div class="t" style="left:389px;top:154px;line-height:16px">2014/11/04</div>
<div class="t" style="left:456px;top:154px;line-height:16px">09:40</div>
<svg class="a" style="left:3px;top:173px" width="16" height="15" viewBox="0 0 16 15"><path d="M3.600 0.800L7.100 5.200H5.100V10.600H2.200V5.200H0.100Z" fill="#d42414"/><path d="M10.700 12.900L14.300 8.500H12.200V3.200H9.300V8.500H7.200Z" fill="#1c5cc8"/></svg>
<div class="t" style="left:21px;top:171px;line-height:16px">Bollinger Bands</div>
<div class="t" style="left:191px;top:171px;line-height:16px"><span class="k">시스템</span></div>
<div class="t" style="left:309px;top:171px;line-height:16px">O</div>
<div class="t" style="left:349px;top:171px;line-height:16px">O</div>
<div class="t" style="left:389px;top:171px;line-height:16px">2014/11/04</div>
<div class="t" style="left:456px;top:171px;line-height:16px">09:40</div>
<svg class="a" style="left:3px;top:190px" width="16" height="15" viewBox="0 0 16 15"><path d="M3.600 0.800L7.100 5.200H5.100V10.600H2.200V5.200H0.100Z" fill="#d42414"/><path d="M10.700 12.900L14.300 8.500H12.200V3.200H9.300V8.500H7.200Z" fill="#1c5cc8"/></svg>
<div class="t" style="left:21px;top:188px;line-height:16px">CCI Avg Cross</div>
<div class="t" style="left:191px;top:188px;line-height:16px"><span class="k">시스템</span></div>
<div class="t" style="left:309px;top:188px;line-height:16px">O</div>
<div class="t" style="left:349px;top:188px;line-height:16px">O</div>
<div class="t" style="left:389px;top:188px;line-height:16px">2014/11/04</div>
<div class="t" style="left:456px;top:188px;line-height:16px">09:40</div>
<svg class="a" style="left:3px;top:207px" width="16" height="15" viewBox="0 0 16 15"><path d="M3.600 0.800L7.100 5.200H5.100V10.600H2.200V5.200H0.100Z" fill="#d42414"/><path d="M10.700 12.900L14.300 8.500H12.200V3.200H9.300V8.500H7.200Z" fill="#1c5cc8"/></svg>
<div class="t" style="left:21px;top:205px;line-height:16px">CCI Bear Avg Cross</div>
<div class="t" style="left:191px;top:205px;line-height:16px"><span class="k">시스템</span></div>
<div class="t" style="left:309px;top:205px;line-height:16px">O</div>
<div class="t" style="left:349px;top:205px;line-height:16px">O</div>
<div class="t" style="left:389px;top:205px;line-height:16px">2014/11/04</div>
<div class="t" style="left:456px;top:205px;line-height:16px">09:40</div>
<div class="a" style="left:491px;top:1px;width:16px;height:224px;background:#ebe9e4;background-image:conic-gradient(#fff 25%,#d4d0c8 0 50%,#fff 0 75%,#d4d0c8 0);background-size:2px 2px"></div>
<div class="btn" style="left:491px;top:1px;width:16px;height:16px"><span class="a" style="left:3px;top:4px;width:0;height:0;border:4px solid transparent;border-bottom:4px solid #000;border-top:0"></span></div>
<div class="btn" style="left:491px;top:17px;width:16px;height:22px"></div>
<div class="btn" style="left:491px;top:209px;width:16px;height:16px"><span class="a" style="left:3px;top:5px;width:0;height:0;border:4px solid transparent;border-top:4px solid #000;border-bottom:0"></span></div>
</div>
<div class="a" style="left:8px;top:71px;width:498px;height:57px;box-sizing:border-box;border:4.500px solid #e81c24"></div>
<div class="a" style="left:12px;top:287px;width:403px;height:33px;box-sizing:border-box;border:1px solid;border-color:#808080 #fff #fff #808080"></div>
<div class="btn" style="left:471px;top:284px;width:22px;height:21px"><svg class="a" style="left:2px;top:2px" width="17" height="15" viewBox="0 0 17 15"><rect x="0.500" y="0.500" width="16" height="13" fill="#fff" stroke="#000"/><rect x="1" y="1" width="15" height="3" fill="#0a1a50"/><path d="M3.500 6.500H6.500V9.500H3.500ZM10.500 7.500H13.500V10.500H10.500Z" fill="none" stroke="#000" stroke-width="1"/><path d="M3 11H7M10 12H14" stroke="#000" stroke-width="1"/></svg></div>
<div class="a" style="left:499px;top:284px;width:23px;height:22px;box-sizing:border-box;border:1px solid;border-color:#404040 #fff #fff #404040;box-shadow:inset 1px 1px 0 #808080"><svg class="a" style="left:0;top:0" width="21" height="20" viewBox="0 0 21 20"><rect x="1" y="1" width="20" height="19" fill="url(#dz)"/><rect x="3.500" y="3.500" width="16" height="13" fill="#fff" stroke="#000"/><rect x="4" y="4" width="15" height="3" fill="#0a1a50"/><path d="M5.500 9.500H8M9.500 9.500H18M5.500 11.500H8M9.500 11.500H18M5.500 13.500H8M9.500 13.500H18" stroke="#000" stroke-width="1" stroke-dasharray="2 1"/></svg></div>
<div class="btn" style="left:338px;top:327px;width:88px;height:23px;text-align:center;line-height:19px;color:#808080;text-shadow:1px 1px 0 #fff"><span class="k">열기</span></div>
<div class="btn" style="left:434px;top:327px;width:88px;height:23px;text-align:center;line-height:19px"><span class="k">취소</span></div>
</div>
</div></body></html>
